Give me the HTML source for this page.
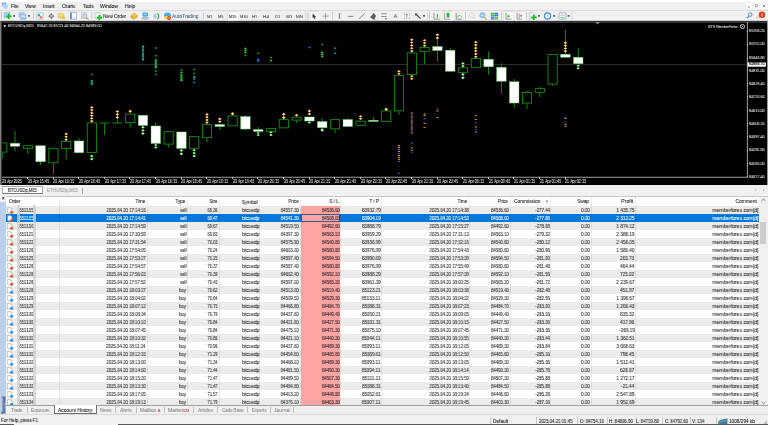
<!DOCTYPE html>
<html><head><meta charset="utf-8"><style>
html,body{margin:0;padding:0;}
body{width:768px;height:425px;overflow:hidden;position:relative;background:#f0f0f0;font-family:"Liberation Sans",sans-serif;}
body>div{position:absolute;}
.t{white-space:nowrap;-webkit-text-stroke:0.08px currentColor;will-change:transform;}
</style></head><body>
<div style="left:0px;top:0px;width:768px;height:10.5px;background:#f0f0f0;"></div>
<div style="left:0px;top:0px;width:768px;height:2px;background:#ffffff;"></div>
<div style="left:0px;top:10.2px;width:768px;height:0.6px;background:#dcdcdc;"></div>
<div class="t" style="left:11.00px;top:3.75px;font-size:5.0px;line-height:5.0px;color:#1a1a1a;transform:scaleX(0.919);transform-origin:left;">File</div>
<div class="t" style="left:25.00px;top:3.75px;font-size:5.0px;line-height:5.0px;color:#1a1a1a;transform:scaleX(0.986);transform-origin:left;">View</div>
<div class="t" style="left:42.75px;top:3.75px;font-size:5.0px;line-height:5.0px;color:#1a1a1a;transform:scaleX(0.932);transform-origin:left;">Insert</div>
<div class="t" style="left:62.00px;top:3.75px;font-size:5.0px;line-height:5.0px;color:#1a1a1a;transform:scaleX(0.883);transform-origin:left;">Charts</div>
<div class="t" style="left:82.50px;top:3.75px;font-size:5.0px;line-height:5.0px;color:#1a1a1a;transform:scaleX(0.900);transform-origin:left;">Tools</div>
<div class="t" style="left:100.00px;top:3.75px;font-size:5.0px;line-height:5.0px;color:#1a1a1a;transform:scaleX(1.012);transform-origin:left;">Window</div>
<div class="t" style="left:125.00px;top:3.75px;font-size:5.0px;line-height:5.0px;color:#1a1a1a;transform:scaleX(0.972);transform-origin:left;">Help</div>
<div style="left:0px;top:10.8px;width:768px;height:10.2px;background:#f0f0f0;"></div>
<svg style="position:absolute;left:0;top:0;z-index:2" width="768" height="22" viewBox="0 0 768 22"><rect x="1.8" y="2.6" width="4.6" height="3.8" rx="0.5" fill="#9cc4f0"/><rect x="3.4" y="4.8" width="4.4" height="4" rx="0.5" fill="#b4d4f8"/><rect x="2.2" y="3.1" width="3.6" height="0.8" fill="#6aa0e0"/><rect x="746" y="2.8" width="6.2" height="6" fill="#ffffff"/><rect x="753.2" y="2.8" width="6.2" height="6" fill="#ffffff"/><rect x="760.8" y="2.8" width="6.2" height="6" fill="#ffffff"/><rect x="747.6" y="6.6" width="2.4" height="0.7" fill="#505a6a"/><rect x="755.2" y="4.7" width="2.4" height="2.2" fill="none" stroke="#707a8a" stroke-width="0.6"/><path d="M762.8 4.6 L765.4 7.2 M765.4 4.6 L762.8 7.2" stroke="#505a6a" stroke-width="0.7"/><rect x="1.2" y="11.8" width="0.8" height="7.5" fill="#b8b8b8"/><rect x="4" y="12.4" width="6" height="5.4" rx="0.6" fill="#a8ccf2" stroke="#7aa8dc" stroke-width="0.4"/><path d="M8.8 13.8 V19 M6.2 16.4 H11.4" stroke="#10c020" stroke-width="1.8"/><rect x="13.2" y="15.0" width="1.8" height="1.8" fill="#5a5a5a"/><rect x="18.8" y="12.4" width="5.6" height="4.6" rx="0.5" fill="#b0d0f4" stroke="#80acdc" stroke-width="0.4"/><rect x="20.4" y="14.4" width="5.8" height="5" rx="0.5" fill="#a0c4ec" stroke="#7aa4d8" stroke-width="0.4"/><rect x="21.2" y="15.6" width="4.2" height="1.2" fill="#e8f2fc"/><rect x="28.1" y="15.0" width="1.8" height="1.8" fill="#5a5a5a"/><rect x="33" y="11.8" width="0.8" height="7.699999999999999" fill="#c4c4c4"/><rect x="36.3" y="12.5" width="7" height="7" rx="1" fill="#cfe2f8" stroke="#9cc0ec" stroke-width="0.5"/><rect x="37.6" y="13.8" width="4.6" height="4.6" fill="#f8fbff"/><circle cx="39" cy="15.2" r="1.2" fill="#30b040"/><circle cx="40.9" cy="17.2" r="1.3" fill="#f07850"/><path d="M51.3 13 L53 15.2 L49.6 15.2 Z M51.3 19.3 L53 17.1 L49.6 17.1 Z M48 16.15 L50.2 14.5 L50.2 17.8 Z M54.6 16.15 L52.4 14.5 L52.4 17.8 Z" fill="#787878"/><rect x="50.5" y="15.3" width="1.6" height="1.7" fill="#9a9a9a"/><path d="M58.2 13.2 H61.5 L62.3 14 H64 V17.5 H58.2 Z" fill="#f2d86a" stroke="#d8b840" stroke-width="0.4"/><path d="M63.4 15.3 L64.2 17 L66 17.2 L64.7 18.3 L65.1 19.8 L63.4 19 L61.7 19.8 L62.1 18.3 L60.8 17.2 L62.6 17 Z" fill="#f0c030"/><rect x="60" y="17.5" width="1" height="2" fill="#c0c0c0"/><rect x="68.7" y="10.9" width="10.299999999999997" height="9.6" fill="#fafafa"/><rect x="68.7" y="10.9" width="10.299999999999997" height="0.7" fill="#cfcfcf"/><rect x="68.7" y="10.9" width="0.6" height="9.6" fill="#dcdcdc"/><rect x="70.3" y="12.8" width="6.4" height="6.4" fill="#ffffff" stroke="#5b9ae0" stroke-width="0.6"/><rect x="70.3" y="12.8" width="1.5" height="6.4" fill="#4a88d8"/><rect x="72.4" y="17.4" width="4" height="1.2" fill="#f4d0d8"/><rect x="81.6" y="12.4" width="5.2" height="6.4" fill="#e8e8e8" stroke="#b8b8b8" stroke-width="0.4"/><circle cx="84.6" cy="16" r="2" fill="#cfe4f8" stroke="#6aa0dc" stroke-width="0.6"/><path d="M86 17.5 L88.6 19.7" stroke="#d89a30" stroke-width="1.1"/><rect x="91.4" y="11.8" width="0.8" height="7.699999999999999" fill="#c4c4c4"/><rect x="95" y="12.8" width="5" height="5.8" fill="#f4f4f4" stroke="#a8a8a8" stroke-width="0.5"/><path d="M99.4 14.9 V20.2 M96.8 17.6 H102.1" stroke="#10c020" stroke-width="1.8"/><path d="M130.8 15.8 L134 13 L137.2 15.2 L137 17.4 L133.6 19.2 L130.8 17.6 Z" fill="#e8b830" stroke="#c08a10" stroke-width="0.4"/><path d="M132 15.6 L134.2 14.2 L136 15.4" stroke="#fff0a0" stroke-width="0.6" fill="none"/><rect x="142.6" y="12.4" width="5.2" height="4.2" rx="0.8" fill="#38a4f0"/><rect x="143.8" y="13.6" width="2.8" height="1.6" fill="#9ad4ff"/><ellipse cx="145.2" cy="18.2" rx="3.5" ry="1.2" fill="#b8c4d4" stroke="#8898b0" stroke-width="0.4"/><circle cx="156.4" cy="16.2" r="3.4" fill="#eef4fa" stroke="#c8d8e8" stroke-width="0.4"/><path d="M156.4 13.6 A2.6 2.6 0 0 0 156.4 18.8 Z" fill="#a8c4ec"/><path d="M157.4 13.4 Q159.8 15.2 157.6 19.4" stroke="#38b038" stroke-width="1.2" fill="none"/><path d="M163.8 16 Q164 12.4 167.4 12.4 Q171 12.6 171 16 Z" fill="#4aa8e8"/><path d="M163.8 16 H171 L170 19.4 H165 Z" fill="#f0d040"/><circle cx="169.2" cy="18" r="1.9" fill="#e03020"/><rect x="168.2" y="17.6" width="2" height="0.8" fill="#ffffff"/><rect x="203.1" y="11.8" width="0.8" height="7.699999999999999" fill="#c4c4c4"/><rect x="227.1" y="10.9" width="10.700000000000017" height="9.6" fill="#fafafa"/><rect x="227.1" y="10.9" width="10.700000000000017" height="0.7" fill="#cfcfcf"/><rect x="227.1" y="10.9" width="0.6" height="9.6" fill="#dcdcdc"/><rect x="305.3" y="10.9" width="0.8" height="9.6" fill="#d4d4d4"/><rect x="306.9" y="12" width="0.7" height="7.6" fill="#d0d0d0"/><rect x="308.4" y="12" width="0.7" height="7.6" fill="#d0d0d0"/><rect x="309.7" y="10.9" width="9.699999999999989" height="9.6" fill="#fafafa"/><rect x="309.7" y="10.9" width="9.699999999999989" height="0.7" fill="#cfcfcf"/><rect x="309.7" y="10.9" width="0.6" height="9.6" fill="#dcdcdc"/><path d="M312.6 13.6 L312.6 18.4 L313.8 17.3 L314.8 19.2 L315.6 18.8 L314.7 17 L316.2 16.9 Z" fill="#3a3a3a"/><path d="M325.6 13 V19.2 M322.5 16.1 H328.8" stroke="#888" stroke-width="0.7"/><rect x="332" y="11.8" width="0.8" height="7.699999999999999" fill="#c4c4c4"/><rect x="338.9" y="13" width="0.9" height="6" fill="#6a6a6a"/><rect x="348" y="15.9" width="5.4" height="0.8" fill="#6a6a6a"/><path d="M359 18.8 L364.6 13.7" stroke="#6a6a6a" stroke-width="0.8"/><path d="M370 17 L372.2 15 L373.2 13 L374.8 14.2 L376 16 L374.6 18.4 L376 19.5 L372.8 19.2 Z" fill="#5a5a5a"/><rect x="381.2" y="13.4" width="5.6" height="0.8" fill="#7a7a7a"/><rect x="381.2" y="16.2" width="5.6" height="0.8" fill="#7a7a7a"/><rect x="385.2" y="18.2" width="1.6" height="1.2" fill="#5a5a5a"/><path d="M393.8 17.8 L395.5 14.2 L397.2 17.8 M394.5 16.6 H396.5" stroke="#6a6a6a" stroke-width="0.7" fill="none"/><rect x="404.2" y="13" width="5.2" height="5.8" fill="#f6f6f6" stroke="#a8a8a8" stroke-width="0.4"/><path d="M405.6 14.6 H408 M406.8 14.6 V17.6" stroke="#5a5a5a" stroke-width="0.6"/><path d="M415.4 13.8 L420.6 18.6" stroke="#4a4a4a" stroke-width="1.2"/><path d="M415 13.4 L417.6 13.8 L415.4 16 Z" fill="#3a3a3a"/><rect x="423.1" y="15.0" width="1.8" height="1.8" fill="#5a5a5a"/><rect x="427.4" y="10.9" width="0.8" height="9.6" fill="#d8d8d8"/><rect x="429.2" y="11.8" width="0.8" height="7.699999999999999" fill="#c4c4c4"/><path d="M434 12.8 V19.2 H439.6" stroke="#5a5a5a" stroke-width="0.6" fill="none"/><path d="M456.2 12.8 V19.2 H461.8" stroke="#5a5a5a" stroke-width="0.6" fill="none"/><rect x="436.8" y="14" width="1.2" height="4" fill="#50c050"/><rect x="442.8" y="10.9" width="9.699999999999989" height="9.6" fill="#fafafa"/><rect x="442.8" y="10.9" width="9.699999999999989" height="0.7" fill="#cfcfcf"/><rect x="442.8" y="10.9" width="0.6" height="9.6" fill="#dcdcdc"/><path d="M444.6 12.8 V19.2 H450.2" stroke="#5a5a5a" stroke-width="0.6" fill="none"/><rect x="446.6" y="12.8" width="2.8" height="4.6" rx="0.6" fill="#20b830"/><path d="M456.8 17.8 Q459 13.4 462 17.2" stroke="#50b050" stroke-width="0.8" fill="none"/><rect x="465.2" y="11.8" width="0.8" height="7.699999999999999" fill="#c4c4c4"/><circle cx="471.8" cy="15.4" r="2.4" fill="none" stroke="#c8c8c8" stroke-width="0.7"/><path d="M473.6 17.2 L475.2 19" stroke="#c8c8c8" stroke-width="0.9"/><circle cx="482.4" cy="15.2" r="2.6" fill="#9ccaf0" stroke="#6aaae4" stroke-width="0.6"/><rect x="481" y="15" width="2.8" height="0.7" fill="#e8f4ff"/><path d="M484.2 17.2 L486.6 19.6" stroke="#c8a040" stroke-width="1.2"/><rect x="490.8" y="12.8" width="3.5" height="3.3" fill="#48b848"/><rect x="494.6" y="12.8" width="3.5" height="3.3" fill="#3a78d8"/><rect x="490.8" y="16.4" width="3.5" height="3.3" fill="#5a90e0"/><rect x="494.6" y="16.4" width="3.5" height="3.3" fill="#78c060"/><rect x="491.6" y="14" width="1.8" height="0.6" fill="#e0f4e0"/><rect x="495.4" y="14" width="1.8" height="0.6" fill="#e0ecff"/><rect x="501" y="11.8" width="0.8" height="7.699999999999999" fill="#c4c4c4"/><rect x="503.5" y="10.9" width="10.0" height="9.6" fill="#fafafa"/><rect x="503.5" y="10.9" width="10.0" height="0.7" fill="#cfcfcf"/><rect x="503.5" y="10.9" width="0.6" height="9.6" fill="#dcdcdc"/><path d="M506 12.8 V19.2 H511.6" stroke="#5a5a5a" stroke-width="0.6" fill="none"/><path d="M507.4 14.2 L510 16.2 L507.4 18.2 Z" fill="#40c050"/><rect x="514.5" y="10.9" width="10.0" height="9.6" fill="#fafafa"/><rect x="514.5" y="10.9" width="10.0" height="0.7" fill="#cfcfcf"/><rect x="514.5" y="10.9" width="0.6" height="9.6" fill="#dcdcdc"/><path d="M517 12.8 V19.2 H522.6" stroke="#5a5a5a" stroke-width="0.6" fill="none"/><rect x="518.6" y="13.4" width="1" height="5" fill="#6aa0dc"/><circle cx="521" cy="15.8" r="1" fill="#e06040"/><rect x="526" y="11.8" width="0.8" height="7.699999999999999" fill="#c4c4c4"/><path d="M529.6 12.6 H533 L534.6 14.2 V18.6 H529.6 Z" fill="#f2f2f2" stroke="#a0a0a0" stroke-width="0.45"/><path d="M533.8 14.8 V20 M531.2 17.4 H536.6" stroke="#10c020" stroke-width="1.8"/><rect x="538.1" y="15.0" width="1.8" height="1.8" fill="#5a5a5a"/><circle cx="547.5" cy="16" r="3.1" fill="#f0f6fc" stroke="#3a88d8" stroke-width="1.1"/><path d="M547.4 14.4 V16.2 H548.6" stroke="#606060" stroke-width="0.4" fill="none"/><rect x="553.1" y="15.0" width="1.8" height="1.8" fill="#5a5a5a"/><rect x="559" y="12.8" width="7" height="6.4" rx="0.6" fill="#f4f8fc" stroke="#78a8e0" stroke-width="0.7"/><path d="M560.4 15.6 L562.2 14.8 L564 15.4 L565 14.8" stroke="#e05040" stroke-width="0.5" fill="none"/><rect x="560.2" y="17.2" width="4.8" height="0.9" fill="#80c870"/><rect x="567.7" y="15.0" width="1.8" height="1.8" fill="#5a5a5a"/><rect x="571.5" y="10.9" width="0.8" height="9.6" fill="#d0d0d0"/><circle cx="750.2" cy="14.6" r="1.8" fill="none" stroke="#3a80d8" stroke-width="0.9"/><path d="M748.8 16.2 L746.8 18.2" stroke="#3a80d8" stroke-width="1.1"/><ellipse cx="758" cy="17.4" rx="2" ry="1.8" fill="#d8d8d8"/><circle cx="762" cy="14.8" r="3.2" fill="#e23a20"/><rect x="761.7" y="13" width="0.7" height="3.6" fill="#ffffff"/></svg>
<div style="left:0px;top:21px;width:768px;height:164px;background:#000;"></div>
<svg style="position:absolute;left:0;top:0" width="768" height="425" viewBox="0 0 768 425">
<rect x="0" y="21" width="1.1" height="164" fill="#7a7a7a"/>
<rect x="1" y="21" width="1" height="164" fill="#3c3c3c"/>
<rect x="0" y="20.8" width="768" height="0.6" fill="#5a5a5a"/><rect x="1" y="21.4" width="767" height="1.6" fill="#363636"/>
<rect x="767" y="21" width="1" height="164" fill="#9a9a9a"/>
<rect x="2" y="176.8" width="745.5" height="0.8" fill="#c8c8c8"/>
<rect x="746.9" y="22" width="0.8" height="155.6" fill="#c8c8c8"/>
<rect x="2" y="64.1" width="745" height="0.8" fill="#343840"/>
<defs><clipPath id="pc"><rect x="2" y="22" width="744.9" height="154.8"/></clipPath></defs><g clip-path="url(#pc)">
<rect x="1.75" y="152.5" width="0.9" height="5.50" fill="#129a12"/>
<rect x="-2.40" y="142.9" width="9.2" height="9.20" fill="#000" stroke="#129a12" stroke-width="0.85"/>
<rect x="14.55" y="131" width="0.9" height="12.00" fill="#129a12"/>
<rect x="14.55" y="146.5" width="0.9" height="4.50" fill="#129a12"/>
<rect x="10.20" y="143.2" width="9.6" height="3.10" fill="#fff" stroke="#3ac03a" stroke-width="0.45"/>
<rect x="27.35" y="148.7" width="0.9" height="5.30" fill="#129a12"/>
<rect x="23.20" y="145.8" width="9.2" height="2.50" fill="#000" stroke="#129a12" stroke-width="0.85"/>
<rect x="40.15" y="145" width="0.9" height="0.50" fill="#129a12"/>
<rect x="40.15" y="162" width="0.9" height="3.00" fill="#129a12"/>
<rect x="35.80" y="145.7" width="9.6" height="16.10" fill="#fff" stroke="#3ac03a" stroke-width="0.45"/>
<rect x="52.95" y="163.2" width="0.9" height="10.55" fill="#129a12"/>
<rect x="48.80" y="148.70000000000002" width="9.2" height="14.10" fill="#000" stroke="#129a12" stroke-width="0.85"/>
<rect x="65.75" y="149" width="0.9" height="10.50" fill="#129a12"/>
<rect x="61.60" y="141.4" width="9.2" height="7.20" fill="#000" stroke="#129a12" stroke-width="0.85"/>
<rect x="78.55" y="138" width="0.9" height="2.75" fill="#129a12"/>
<rect x="74.20" y="140.95" width="9.6" height="11.85" fill="#fff" stroke="#3ac03a" stroke-width="0.45"/>
<rect x="87.20" y="122.9" width="9.2" height="29.70" fill="#000" stroke="#129a12" stroke-width="0.85"/>
<rect x="104.15" y="123" width="0.9" height="12.00" fill="#129a12"/>
<rect x="99.60" y="122.55" width="10" height="0.9" fill="#129a12"/>
<rect x="116.95" y="112" width="0.9" height="11.00" fill="#129a12"/>
<rect x="112.40" y="122.55" width="10" height="0.9" fill="#129a12"/>
<rect x="129.75" y="123" width="0.9" height="4.50" fill="#129a12"/>
<rect x="125.60" y="114.15" width="9.2" height="8.45" fill="#000" stroke="#129a12" stroke-width="0.85"/>
<rect x="138.20" y="115.2" width="9.6" height="10.35" fill="#fff" stroke="#3ac03a" stroke-width="0.45"/>
<rect x="155.35" y="122.5" width="0.9" height="3.25" fill="#129a12"/>
<rect x="151.00" y="125.95" width="9.6" height="17.60" fill="#fff" stroke="#3ac03a" stroke-width="0.45"/>
<rect x="168.15" y="144.5" width="0.9" height="3.00" fill="#129a12"/>
<rect x="164.00" y="131.65" width="9.2" height="12.45" fill="#000" stroke="#129a12" stroke-width="0.85"/>
<rect x="176.60" y="131.95" width="9.6" height="16.60" fill="#fff" stroke="#3ac03a" stroke-width="0.45"/>
<rect x="189.60" y="136.65" width="9.2" height="11.70" fill="#000" stroke="#129a12" stroke-width="0.85"/>
<rect x="206.55" y="138" width="0.9" height="4.50" fill="#129a12"/>
<rect x="202.40" y="124.65" width="9.2" height="12.95" fill="#000" stroke="#129a12" stroke-width="0.85"/>
<rect x="219.35" y="126.75" width="0.9" height="3.25" fill="#129a12"/>
<rect x="215.00" y="124.45" width="9.6" height="2.10" fill="#fff" stroke="#3ac03a" stroke-width="0.45"/>
<rect x="228.00" y="115.9" width="9.2" height="9.95" fill="#000" stroke="#129a12" stroke-width="0.85"/>
<rect x="244.95" y="115" width="0.9" height="1.25" fill="#129a12"/>
<rect x="244.95" y="129.25" width="0.9" height="1.25" fill="#129a12"/>
<rect x="240.60" y="116.45" width="9.6" height="12.60" fill="#fff" stroke="#3ac03a" stroke-width="0.45"/>
<rect x="257.75" y="127" width="0.9" height="2.25" fill="#129a12"/>
<rect x="253.40" y="129.45" width="9.6" height="2.10" fill="#fff" stroke="#3ac03a" stroke-width="0.45"/>
<rect x="266.40" y="128.65" width="9.2" height="2.70" fill="#000" stroke="#129a12" stroke-width="0.85"/>
<rect x="279.20" y="119.65" width="9.2" height="8.20" fill="#000" stroke="#129a12" stroke-width="0.85"/>
<rect x="296.15" y="120.5" width="0.9" height="2.50" fill="#129a12"/>
<rect x="292.00" y="117.15" width="9.2" height="2.95" fill="#000" stroke="#129a12" stroke-width="0.85"/>
<rect x="304.60" y="116.95" width="9.6" height="4.10" fill="#fff" stroke="#3ac03a" stroke-width="0.45"/>
<rect x="321.75" y="118" width="0.9" height="3.25" fill="#129a12"/>
<rect x="317.40" y="121.45" width="9.6" height="6.35" fill="#fff" stroke="#3ac03a" stroke-width="0.45"/>
<rect x="334.55" y="129.25" width="0.9" height="3.75" fill="#129a12"/>
<rect x="330.40" y="119.65" width="9.2" height="9.20" fill="#000" stroke="#129a12" stroke-width="0.85"/>
<rect x="347.35" y="118" width="0.9" height="1.25" fill="#129a12"/>
<rect x="343.00" y="119.45" width="9.6" height="7.10" fill="#fff" stroke="#3ac03a" stroke-width="0.45"/>
<rect x="356.00" y="121.15" width="9.2" height="4.20" fill="#000" stroke="#129a12" stroke-width="0.85"/>
<rect x="372.95" y="117" width="0.9" height="3.00" fill="#129a12"/>
<rect x="368.60" y="120.2" width="9.6" height="1.35" fill="#fff" stroke="#3ac03a" stroke-width="0.45"/>
<rect x="381.60" y="110.9" width="9.2" height="10.45" fill="#000" stroke="#129a12" stroke-width="0.85"/>
<rect x="398.55" y="111.25" width="0.9" height="3.75" fill="#129a12"/>
<rect x="394.40" y="75.4" width="9.2" height="35.45" fill="#000" stroke="#129a12" stroke-width="0.85"/>
<rect x="407.20" y="52.9" width="9.2" height="21.70" fill="#000" stroke="#129a12" stroke-width="0.85"/>
<rect x="424.15" y="52" width="0.9" height="12.00" fill="#129a12"/>
<rect x="420.00" y="47.4" width="9.2" height="4.20" fill="#000" stroke="#129a12" stroke-width="0.85"/>
<rect x="436.95" y="38.25" width="0.9" height="8.00" fill="#129a12"/>
<rect x="436.95" y="50.75" width="0.9" height="10.75" fill="#129a12"/>
<rect x="432.60" y="46.45" width="9.6" height="4.10" fill="#fff" stroke="#3ac03a" stroke-width="0.45"/>
<rect x="449.75" y="48" width="0.9" height="2.00" fill="#129a12"/>
<rect x="445.40" y="50.2" width="9.6" height="21.10" fill="#fff" stroke="#3ac03a" stroke-width="0.45"/>
<rect x="458.40" y="67.9" width="9.2" height="4.45" fill="#000" stroke="#129a12" stroke-width="0.85"/>
<rect x="471.20" y="58.65" width="9.2" height="8.70" fill="#000" stroke="#129a12" stroke-width="0.85"/>
<rect x="488.15" y="51.5" width="0.9" height="7.50" fill="#129a12"/>
<rect x="488.15" y="67" width="0.9" height="7.50" fill="#129a12"/>
<rect x="483.80" y="59.2" width="9.6" height="7.60" fill="#fff" stroke="#3ac03a" stroke-width="0.45"/>
<rect x="500.95" y="63.25" width="0.9" height="3.75" fill="#129a12"/>
<rect x="500.95" y="81.5" width="0.9" height="11.75" fill="#129a12"/>
<rect x="496.60" y="67.2" width="9.6" height="14.10" fill="#fff" stroke="#3ac03a" stroke-width="0.45"/>
<rect x="513.75" y="79" width="0.9" height="2.50" fill="#129a12"/>
<rect x="513.75" y="103.25" width="0.9" height="5.00" fill="#129a12"/>
<rect x="509.40" y="81.7" width="9.6" height="21.35" fill="#fff" stroke="#3ac03a" stroke-width="0.45"/>
<rect x="526.55" y="90.75" width="0.9" height="1.25" fill="#129a12"/>
<rect x="526.55" y="103.5" width="0.9" height="5.50" fill="#129a12"/>
<rect x="522.40" y="92.4" width="9.2" height="10.70" fill="#000" stroke="#129a12" stroke-width="0.85"/>
<rect x="539.35" y="86.5" width="0.9" height="1.75" fill="#129a12"/>
<rect x="539.35" y="92.75" width="0.9" height="4.25" fill="#129a12"/>
<rect x="535.20" y="88.65" width="9.2" height="3.70" fill="#000" stroke="#129a12" stroke-width="0.85"/>
<rect x="552.15" y="84.5" width="0.9" height="1.25" fill="#129a12"/>
<rect x="548.00" y="54.4" width="9.2" height="29.70" fill="#000" stroke="#129a12" stroke-width="0.85"/>
<rect x="564.95" y="30" width="0.9" height="24.00" fill="#129a12"/>
<rect x="560.60" y="54.2" width="9.6" height="3.10" fill="#fff" stroke="#3ac03a" stroke-width="0.45"/>
<rect x="577.75" y="48.25" width="0.9" height="8.75" fill="#129a12"/>
<rect x="573.40" y="57.2" width="9.6" height="6.60" fill="#fff" stroke="#3ac03a" stroke-width="0.45"/>
<polygon points="66.20,132.60 68.10,133.92 66.20,135.23 64.30,133.92" fill="#e89428"/>
<polygon points="66.00,133.20 67.30,133.92 66.00,134.73 64.90,133.92" fill="#fff6c0"/>
<polygon points="66.20,135.43 68.10,136.75 66.20,138.07 64.30,136.75" fill="#e89428"/>
<polygon points="66.00,136.03 67.30,136.75 66.00,137.57 64.90,136.75" fill="#fff6c0"/>
<polygon points="66.20,138.27 68.10,139.58 66.20,140.90 64.30,139.58" fill="#e89428"/>
<polygon points="66.00,138.87 67.30,139.58 66.00,140.40 64.90,139.58" fill="#fff6c0"/>
<polygon points="91.80,106.10 93.70,107.38 91.80,108.65 89.90,107.38" fill="#e89428"/>
<polygon points="91.60,106.70 92.90,107.38 91.60,108.15 90.50,107.38" fill="#fff6c0"/>
<polygon points="91.80,108.85 93.70,110.12 91.80,111.40 89.90,110.12" fill="#e89428"/>
<polygon points="91.60,109.45 92.90,110.12 91.60,110.90 90.50,110.12" fill="#fff6c0"/>
<polygon points="91.80,111.60 93.70,112.88 91.80,114.15 89.90,112.88" fill="#e89428"/>
<polygon points="91.60,112.20 92.90,112.88 91.60,113.65 90.50,112.88" fill="#fff6c0"/>
<polygon points="91.80,114.35 93.70,115.62 91.80,116.90 89.90,115.62" fill="#e89428"/>
<polygon points="91.60,114.95 92.90,115.62 91.60,116.40 90.50,115.62" fill="#fff6c0"/>
<polygon points="91.80,117.10 93.70,118.38 91.80,119.65 89.90,118.38" fill="#e89428"/>
<polygon points="91.60,117.70 92.90,118.38 91.60,119.15 90.50,118.38" fill="#fff6c0"/>
<polygon points="91.80,119.85 93.70,121.12 91.80,122.40 89.90,121.12" fill="#e89428"/>
<polygon points="91.60,120.45 92.90,121.12 91.60,121.90 90.50,121.12" fill="#fff6c0"/>
<polygon points="117.40,110.10 119.30,111.46 117.40,112.82 115.50,111.46" fill="#e89428"/>
<polygon points="117.20,110.70 118.50,111.46 117.20,112.32 116.10,111.46" fill="#fff6c0"/>
<polygon points="117.40,113.02 119.30,114.38 117.40,115.73 115.50,114.38" fill="#e89428"/>
<polygon points="117.20,113.62 118.50,114.38 117.20,115.23 116.10,114.38" fill="#fff6c0"/>
<polygon points="117.40,115.93 119.30,117.29 117.40,118.65 115.50,117.29" fill="#e89428"/>
<polygon points="117.20,116.53 118.50,117.29 117.20,118.15 116.10,117.29" fill="#fff6c0"/>
<polygon points="130.20,109.60 132.10,111.25 130.20,112.90 128.30,111.25" fill="#e89428"/>
<polygon points="130.00,110.20 131.30,111.25 130.00,112.40 128.90,111.25" fill="#fff6c0"/>
<polygon points="207.00,113.10 208.90,114.38 207.00,115.65 205.10,114.38" fill="#e89428"/>
<polygon points="206.80,113.70 208.10,114.38 206.80,115.15 205.70,114.38" fill="#fff6c0"/>
<polygon points="207.00,115.85 208.90,117.12 207.00,118.40 205.10,117.12" fill="#e89428"/>
<polygon points="206.80,116.45 208.10,117.12 206.80,117.90 205.70,117.12" fill="#fff6c0"/>
<polygon points="207.00,118.60 208.90,119.88 207.00,121.15 205.10,119.88" fill="#e89428"/>
<polygon points="206.80,119.20 208.10,119.88 206.80,120.65 205.70,119.88" fill="#fff6c0"/>
<polygon points="207.00,121.35 208.90,122.62 207.00,123.90 205.10,122.62" fill="#e89428"/>
<polygon points="206.80,121.95 208.10,122.62 206.80,123.40 205.70,122.62" fill="#fff6c0"/>
<polygon points="219.80,117.60 221.70,118.88 219.80,120.15 217.90,118.88" fill="#e89428"/>
<polygon points="219.60,118.20 220.90,118.88 219.60,119.65 218.50,118.88" fill="#fff6c0"/>
<polygon points="219.80,120.35 221.70,121.62 219.80,122.90 217.90,121.62" fill="#e89428"/>
<polygon points="219.60,120.95 220.90,121.62 219.60,122.40 218.50,121.62" fill="#fff6c0"/>
<polygon points="232.60,112.10 234.50,113.75 232.60,115.40 230.70,113.75" fill="#e89428"/>
<polygon points="232.40,112.70 233.70,113.75 232.40,114.90 231.30,113.75" fill="#fff6c0"/>
<polygon points="283.80,112.60 285.70,114.19 283.80,115.78 281.90,114.19" fill="#e89428"/>
<polygon points="283.60,113.20 284.90,114.19 283.60,115.28 282.50,114.19" fill="#fff6c0"/>
<polygon points="283.80,115.97 285.70,117.56 283.80,119.15 281.90,117.56" fill="#e89428"/>
<polygon points="283.60,116.58 284.90,117.56 283.60,118.65 282.50,117.56" fill="#fff6c0"/>
<polygon points="296.60,113.85 298.50,115.25 296.60,116.65 294.70,115.25" fill="#e89428"/>
<polygon points="296.40,114.45 297.70,115.25 296.40,116.15 295.30,115.25" fill="#fff6c0"/>
<polygon points="309.40,109.60 311.30,111.00 309.40,112.40 307.50,111.00" fill="#e89428"/>
<polygon points="309.20,110.20 310.50,111.00 309.20,111.90 308.10,111.00" fill="#fff6c0"/>
<polygon points="309.40,112.60 311.30,114.00 309.40,115.40 307.50,114.00" fill="#e89428"/>
<polygon points="309.20,113.20 310.50,114.00 309.20,114.90 308.10,114.00" fill="#fff6c0"/>
<polygon points="360.60,115.10 362.50,116.25 360.60,117.40 358.70,116.25" fill="#e89428"/>
<polygon points="360.40,115.70 361.70,116.25 360.40,116.90 359.30,116.25" fill="#fff6c0"/>
<polygon points="360.60,117.60 362.50,118.75 360.60,119.90 358.70,118.75" fill="#e89428"/>
<polygon points="360.40,118.20 361.70,118.75 360.40,119.40 359.30,118.75" fill="#fff6c0"/>
<polygon points="386.20,107.60 388.10,109.25 386.20,110.90 384.30,109.25" fill="#e89428"/>
<polygon points="386.00,108.20 387.30,109.25 386.00,110.40 384.90,109.25" fill="#fff6c0"/>
<polygon points="399.00,70.10 400.90,71.25 399.00,72.40 397.10,71.25" fill="#e89428"/>
<polygon points="398.80,70.70 400.10,71.25 398.80,71.90 397.70,71.25" fill="#fff6c0"/>
<polygon points="399.00,72.60 400.90,73.75 399.00,74.90 397.10,73.75" fill="#e89428"/>
<polygon points="398.80,73.20 400.10,73.75 398.80,74.40 397.70,73.75" fill="#fff6c0"/>
<polygon points="411.80,38.35 413.70,39.67 411.80,41.00 409.90,39.67" fill="#e89428"/>
<polygon points="411.60,38.95 412.90,39.67 411.60,40.50 410.50,39.67" fill="#fff6c0"/>
<polygon points="411.80,41.20 413.70,42.52 411.80,43.85 409.90,42.52" fill="#e89428"/>
<polygon points="411.60,41.80 412.90,42.52 411.60,43.35 410.50,42.52" fill="#fff6c0"/>
<polygon points="411.80,44.05 413.70,45.38 411.80,46.70 409.90,45.38" fill="#e89428"/>
<polygon points="411.60,44.65 412.90,45.38 411.60,46.20 410.50,45.38" fill="#fff6c0"/>
<polygon points="411.80,46.90 413.70,48.22 411.80,49.55 409.90,48.22" fill="#e89428"/>
<polygon points="411.60,47.50 412.90,48.22 411.60,49.05 410.50,48.22" fill="#fff6c0"/>
<polygon points="411.80,49.75 413.70,51.07 411.80,52.40 409.90,51.07" fill="#e89428"/>
<polygon points="411.60,50.35 412.90,51.07 411.60,51.90 410.50,51.07" fill="#fff6c0"/>
<polygon points="411.80,75.10 413.70,76.25 411.80,77.40 409.90,76.25" fill="#e89428"/>
<polygon points="411.60,75.70 412.90,76.25 411.60,76.90 410.50,76.25" fill="#fff6c0"/>
<polygon points="411.80,77.60 413.70,78.75 411.80,79.90 409.90,78.75" fill="#e89428"/>
<polygon points="411.60,78.20 412.90,78.75 411.60,79.40 410.50,78.75" fill="#fff6c0"/>
<polygon points="424.60,39.10 426.50,40.33 424.60,41.57 422.70,40.33" fill="#e89428"/>
<polygon points="424.40,39.70 425.70,40.33 424.40,41.07 423.30,40.33" fill="#fff6c0"/>
<polygon points="424.60,41.77 426.50,43.00 424.60,44.23 422.70,43.00" fill="#e89428"/>
<polygon points="424.40,42.37 425.70,43.00 424.40,43.73 423.30,43.00" fill="#fff6c0"/>
<polygon points="424.60,44.43 426.50,45.67 424.60,46.90 422.70,45.67" fill="#e89428"/>
<polygon points="424.40,45.03 425.70,45.67 424.40,46.40 423.30,45.67" fill="#fff6c0"/>
<polygon points="437.40,33.35 439.30,34.81 437.40,36.27 435.50,34.81" fill="#e89428"/>
<polygon points="437.20,33.95 438.50,34.81 437.20,35.77 436.10,34.81" fill="#fff6c0"/>
<polygon points="437.40,36.48 439.30,37.94 437.40,39.40 435.50,37.94" fill="#e89428"/>
<polygon points="437.20,37.08 438.50,37.94 437.20,38.90 436.10,37.94" fill="#fff6c0"/>
<polygon points="475.80,40.85 477.70,42.21 475.80,43.57 473.90,42.21" fill="#e89428"/>
<polygon points="475.60,41.45 476.90,42.21 475.60,43.07 474.50,42.21" fill="#fff6c0"/>
<polygon points="475.80,43.77 477.70,45.12 475.80,46.48 473.90,45.12" fill="#e89428"/>
<polygon points="475.60,44.37 476.90,45.12 475.60,45.98 474.50,45.12" fill="#fff6c0"/>
<polygon points="475.80,46.68 477.70,48.04 475.80,49.40 473.90,48.04" fill="#e89428"/>
<polygon points="475.60,47.28 476.90,48.04 475.60,48.90 474.50,48.04" fill="#fff6c0"/>
<polygon points="475.80,49.60 477.70,50.96 475.80,52.32 473.90,50.96" fill="#e89428"/>
<polygon points="475.60,50.20 476.90,50.96 475.60,51.82 474.50,50.96" fill="#fff6c0"/>
<polygon points="475.80,52.52 477.70,53.88 475.80,55.23 473.90,53.88" fill="#e89428"/>
<polygon points="475.60,53.12 476.90,53.88 475.60,54.73 474.50,53.88" fill="#fff6c0"/>
<polygon points="475.80,55.43 477.70,56.79 475.80,58.15 473.90,56.79" fill="#e89428"/>
<polygon points="475.60,56.03 476.90,56.79 475.60,57.65 474.50,56.79" fill="#fff6c0"/>
<polygon points="565.40,41.60 567.30,42.88 565.40,44.15 563.50,42.88" fill="#e89428"/>
<polygon points="565.20,42.20 566.50,42.88 565.20,43.65 564.10,42.88" fill="#fff6c0"/>
<polygon points="565.40,44.35 567.30,45.62 565.40,46.90 563.50,45.62" fill="#e89428"/>
<polygon points="565.20,44.95 566.50,45.62 565.20,46.40 564.10,45.62" fill="#fff6c0"/>
<polygon points="565.40,47.10 567.30,48.38 565.40,49.65 563.50,48.38" fill="#e89428"/>
<polygon points="565.20,47.70 566.50,48.38 565.20,49.15 564.10,48.38" fill="#fff6c0"/>
<polygon points="565.40,49.85 567.30,51.12 565.40,52.40 563.50,51.12" fill="#e89428"/>
<polygon points="565.20,50.45 566.50,51.12 565.20,51.90 564.10,51.12" fill="#fff6c0"/>
<polygon points="91.80,154.60 93.70,156.00 91.80,157.40 89.90,156.00" fill="#38c838"/>
<polygon points="91.60,155.20 92.90,156.00 91.60,156.90 90.50,156.00" fill="#e0ffe0"/>
<polygon points="91.80,157.60 93.70,159.00 91.80,160.40 89.90,159.00" fill="#38c838"/>
<polygon points="91.60,158.20 92.90,159.00 91.60,159.90 90.50,159.00" fill="#e0ffe0"/>
<polygon points="143.00,125.85 144.90,127.29 143.00,128.73 141.10,127.29" fill="#38c838"/>
<polygon points="142.80,126.45 144.10,127.29 142.80,128.23 141.70,127.29" fill="#e0ffe0"/>
<polygon points="143.00,128.93 144.90,130.38 143.00,131.82 141.10,130.38" fill="#38c838"/>
<polygon points="142.80,129.53 144.10,130.38 142.80,131.32 141.70,130.38" fill="#e0ffe0"/>
<polygon points="143.00,132.02 144.90,133.46 143.00,134.90 141.10,133.46" fill="#38c838"/>
<polygon points="142.80,132.62 144.10,133.46 142.80,134.40 141.70,133.46" fill="#e0ffe0"/>
<polygon points="155.80,143.85 157.70,145.00 155.80,146.15 153.90,145.00" fill="#38c838"/>
<polygon points="155.60,144.45 156.90,145.00 155.60,145.65 154.50,145.00" fill="#e0ffe0"/>
<polygon points="155.80,146.35 157.70,147.50 155.80,148.65 153.90,147.50" fill="#38c838"/>
<polygon points="155.60,146.95 156.90,147.50 155.60,148.15 154.50,147.50" fill="#e0ffe0"/>
<polygon points="181.40,148.85 183.30,150.44 181.40,152.03 179.50,150.44" fill="#38c838"/>
<polygon points="181.20,149.45 182.50,150.44 181.20,151.53 180.10,150.44" fill="#e0ffe0"/>
<polygon points="181.40,152.22 183.30,153.81 181.40,155.40 179.50,153.81" fill="#38c838"/>
<polygon points="181.20,152.82 182.50,153.81 181.20,154.90 180.10,153.81" fill="#e0ffe0"/>
<polygon points="194.20,148.85 196.10,150.21 194.20,151.57 192.30,150.21" fill="#38c838"/>
<polygon points="194.00,149.45 195.30,150.21 194.00,151.07 192.90,150.21" fill="#e0ffe0"/>
<polygon points="194.20,151.77 196.10,153.12 194.20,154.48 192.30,153.12" fill="#38c838"/>
<polygon points="194.00,152.37 195.30,153.12 194.00,153.98 192.90,153.12" fill="#e0ffe0"/>
<polygon points="194.20,154.68 196.10,156.04 194.20,157.40 192.30,156.04" fill="#38c838"/>
<polygon points="194.00,155.28 195.30,156.04 194.00,156.90 192.90,156.04" fill="#e0ffe0"/>
<polygon points="258.20,131.85 260.10,132.88 258.20,133.90 256.30,132.88" fill="#38c838"/>
<polygon points="258.00,132.45 259.30,132.88 258.00,133.40 256.90,132.88" fill="#e0ffe0"/>
<polygon points="258.20,134.10 260.10,135.12 258.20,136.15 256.30,135.12" fill="#38c838"/>
<polygon points="258.00,134.70 259.30,135.12 258.00,135.65 256.90,135.12" fill="#e0ffe0"/>
<polygon points="271.00,131.10 272.90,132.31 271.00,133.53 269.10,132.31" fill="#38c838"/>
<polygon points="270.80,131.70 272.10,132.31 270.80,133.03 269.70,132.31" fill="#e0ffe0"/>
<polygon points="271.00,133.72 272.90,134.94 271.00,136.15 269.10,134.94" fill="#38c838"/>
<polygon points="270.80,134.32 272.10,134.94 270.80,135.65 269.70,134.94" fill="#e0ffe0"/>
<polygon points="309.40,121.35 311.30,122.50 309.40,123.65 307.50,122.50" fill="#38c838"/>
<polygon points="309.20,121.95 310.50,122.50 309.20,123.15 308.10,122.50" fill="#e0ffe0"/>
<polygon points="322.20,128.10 324.10,130.00 322.20,131.90 320.30,130.00" fill="#38c838"/>
<polygon points="322.00,128.70 323.30,130.00 322.00,131.40 320.90,130.00" fill="#e0ffe0"/>
<polygon points="463.00,62.10 464.90,63.38 463.00,64.65 461.10,63.38" fill="#38c838"/>
<polygon points="462.80,62.70 464.10,63.38 462.80,64.15 461.70,63.38" fill="#e0ffe0"/>
<polygon points="463.00,64.85 464.90,66.12 463.00,67.40 461.10,66.12" fill="#38c838"/>
<polygon points="462.80,65.45 464.10,66.12 462.80,66.90 461.70,66.12" fill="#e0ffe0"/>
<polygon points="463.00,72.85 464.90,74.44 463.00,76.03 461.10,74.44" fill="#38c838"/>
<polygon points="462.80,73.45 464.10,74.44 462.80,75.53 461.70,74.44" fill="#e0ffe0"/>
<polygon points="463.00,76.22 464.90,77.81 463.00,79.40 461.10,77.81" fill="#38c838"/>
<polygon points="462.80,76.83 464.10,77.81 462.80,78.90 461.70,77.81" fill="#e0ffe0"/>
<polygon points="578.20,64.60 580.10,65.75 578.20,66.90 576.30,65.75" fill="#38c838"/>
<polygon points="578.00,65.20 579.30,65.75 578.00,66.40 576.90,65.75" fill="#e0ffe0"/>
<polygon points="578.20,67.10 580.10,68.25 578.20,69.40 576.30,68.25" fill="#38c838"/>
<polygon points="578.00,67.70 579.30,68.25 578.00,68.90 576.90,68.25" fill="#e0ffe0"/>
<rect x="90.70" y="73.75" width="2.2" height="1.5" fill="#1a8a2a"/>
<rect x="90.70" y="80.25" width="2.2" height="1.5" fill="#28d048"/>
<rect x="90.70" y="81.75" width="2.2" height="1.5" fill="#2070d8"/>
<rect x="90.70" y="83.25" width="2.2" height="1.5" fill="#28d048"/>
<rect x="141.90" y="45.75" width="2.2" height="1.5" fill="#28d048"/>
<rect x="141.90" y="47.25" width="2.2" height="1.5" fill="#2070d8"/>
<rect x="141.90" y="49.25" width="2.2" height="1.5" fill="#28d048"/>
<rect x="141.90" y="51.25" width="2.2" height="1.5" fill="#2070d8"/>
<rect x="141.90" y="53.25" width="2.2" height="1.5" fill="#28d048"/>
<rect x="141.90" y="55.25" width="2.2" height="1.5" fill="#28d048"/>
<rect x="141.90" y="57.25" width="2.2" height="1.5" fill="#2070d8"/>
<rect x="141.90" y="58.75" width="2.2" height="1.5" fill="#28d048"/>
<rect x="154.70" y="47.25" width="2.2" height="1.5" fill="#1a8a2a"/>
<rect x="154.70" y="55.00" width="2.2" height="1.5" fill="#1a8a2a"/>
<rect x="154.70" y="59.25" width="2.2" height="1.5" fill="#28d048"/>
<rect x="154.70" y="61.25" width="2.2" height="1.5" fill="#28d048"/>
<rect x="154.70" y="63.25" width="2.2" height="1.5" fill="#28d048"/>
<rect x="154.70" y="65.25" width="2.2" height="1.5" fill="#28d048"/>
<rect x="154.70" y="66.75" width="2.2" height="1.5" fill="#28d048"/>
<rect x="154.70" y="70.25" width="2.2" height="1.5" fill="#1a8a2a"/>
<rect x="154.70" y="73.75" width="2.2" height="1.5" fill="#1a8a2a"/>
<rect x="180.30" y="69.25" width="2.2" height="1.5" fill="#1a8a2a"/>
<rect x="180.30" y="71.75" width="2.2" height="1.5" fill="#28d048"/>
<rect x="180.30" y="74.25" width="2.2" height="1.5" fill="#28d048"/>
<rect x="180.30" y="76.25" width="2.2" height="1.5" fill="#28d048"/>
<rect x="180.30" y="78.25" width="2.2" height="1.5" fill="#28d048"/>
<rect x="180.30" y="79.75" width="2.2" height="1.5" fill="#28d048"/>
<rect x="193.10" y="68.75" width="2.2" height="1.5" fill="#1a8a2a"/>
<rect x="193.10" y="72.75" width="2.2" height="1.5" fill="#1a8a2a"/>
<rect x="193.10" y="76.25" width="2.2" height="1.5" fill="#28d048"/>
<rect x="193.10" y="78.25" width="2.2" height="1.5" fill="#2070d8"/>
<rect x="193.10" y="81.75" width="2.2" height="1.5" fill="#2070d8"/>
<rect x="244.30" y="47.75" width="2.2" height="1.5" fill="#28d048"/>
<rect x="244.30" y="49.75" width="2.2" height="1.5" fill="#28d048"/>
<rect x="244.30" y="51.75" width="2.2" height="1.5" fill="#28d048"/>
<rect x="244.30" y="54.75" width="2.2" height="1.5" fill="#1a8a2a"/>
<rect x="257.10" y="52.50" width="2.2" height="1.5" fill="#1a8a2a"/>
<rect x="257.10" y="58.75" width="2.2" height="1.5" fill="#2070d8"/>
<rect x="257.10" y="60.25" width="2.2" height="1.5" fill="#2070d8"/>
<rect x="269.90" y="56.75" width="2.2" height="1.5" fill="#1a8a2a"/>
<rect x="269.90" y="59.75" width="2.2" height="1.5" fill="#28d048"/>
<rect x="308.30" y="46.75" width="2.2" height="1.5" fill="#2070d8"/>
<rect x="321.10" y="43.75" width="2.2" height="1.5" fill="#1a8a2a"/>
<rect x="321.10" y="51.75" width="2.2" height="1.5" fill="#28d048"/>
<rect x="321.10" y="53.75" width="2.2" height="1.5" fill="#28d048"/>
<rect x="321.10" y="55.75" width="2.2" height="1.5" fill="#28d048"/>
<rect x="333.90" y="47.50" width="2.2" height="1.5" fill="#1a8a2a"/>
<rect x="333.90" y="52.50" width="2.2" height="1.5" fill="#2070d8"/>
<rect x="397.90" y="144.95" width="2.2" height="1.1" fill="#d08a30"/>
<rect x="397.90" y="146.95" width="2.2" height="1.1" fill="#d08a30"/>
<rect x="397.90" y="148.95" width="2.2" height="1.1" fill="#6a50c0"/>
<rect x="397.90" y="150.95" width="2.2" height="1.1" fill="#d08a30"/>
<rect x="397.90" y="152.95" width="2.2" height="1.1" fill="#2a3ab8"/>
<rect x="397.90" y="154.95" width="2.2" height="1.1" fill="#d08a30"/>
<rect x="397.90" y="156.95" width="2.2" height="1.1" fill="#d08a30"/>
<rect x="397.90" y="158.95" width="2.2" height="1.1" fill="#d08a30"/>
<rect x="397.90" y="160.95" width="2.2" height="1.1" fill="#6a50c0"/>
<rect x="397.90" y="172.70" width="2.2" height="1.1" fill="#6a50c0"/>
<rect x="410.70" y="112.45" width="2.2" height="1.1" fill="#d08a30"/>
<rect x="410.70" y="114.45" width="2.2" height="1.1" fill="#6a50c0"/>
<rect x="410.70" y="116.45" width="2.2" height="1.1" fill="#d08a30"/>
<rect x="410.70" y="118.45" width="2.2" height="1.1" fill="#6a50c0"/>
<rect x="410.70" y="120.45" width="2.2" height="1.1" fill="#d08a30"/>
<rect x="410.70" y="122.45" width="2.2" height="1.1" fill="#d08a30"/>
<rect x="410.70" y="124.45" width="2.2" height="1.1" fill="#6a50c0"/>
<rect x="410.70" y="126.45" width="2.2" height="1.1" fill="#d08a30"/>
<rect x="410.70" y="128.45" width="2.2" height="1.1" fill="#d08a30"/>
<rect x="410.70" y="130.45" width="2.2" height="1.1" fill="#6a50c0"/>
<rect x="410.70" y="132.45" width="2.2" height="1.1" fill="#d08a30"/>
<rect x="410.70" y="142.45" width="2.2" height="1.1" fill="#6a50c0"/>
<rect x="410.70" y="147.45" width="2.2" height="1.1" fill="#d08a30"/>
<rect x="410.70" y="149.95" width="2.2" height="1.1" fill="#d08a30"/>
<rect x="410.70" y="151.95" width="2.2" height="1.1" fill="#2a3ab8"/>
<rect x="423.50" y="113.45" width="2.2" height="1.1" fill="#d08a30"/>
<rect x="423.50" y="114.95" width="2.2" height="1.1" fill="#d08a30"/>
<rect x="423.50" y="118.20" width="2.2" height="1.1" fill="#6a50c0"/>
<rect x="423.50" y="122.70" width="2.2" height="1.1" fill="#d08a30"/>
<rect x="423.50" y="126.95" width="2.2" height="1.1" fill="#d08a30"/>
<rect x="436.30" y="108.45" width="2.2" height="1.1" fill="#6a50c0"/>
<rect x="436.30" y="110.45" width="2.2" height="1.1" fill="#d08a30"/>
<rect x="436.30" y="116.95" width="2.2" height="1.1" fill="#d08a30"/>
<rect x="474.70" y="114.95" width="2.2" height="1.1" fill="#d08a30"/>
<rect x="474.70" y="118.95" width="2.2" height="1.1" fill="#d08a30"/>
<rect x="474.70" y="121.95" width="2.2" height="1.1" fill="#2a3ab8"/>
<rect x="474.70" y="126.45" width="2.2" height="1.1" fill="#d08a30"/>
<rect x="474.70" y="128.95" width="2.2" height="1.1" fill="#2a3ab8"/>
<rect x="474.70" y="131.45" width="2.2" height="1.1" fill="#d08a30"/>
<rect x="564.30" y="116.45" width="2.2" height="1.1" fill="#2a3ab8"/>
<rect x="564.30" y="117.95" width="2.2" height="1.1" fill="#d08a30"/>
<rect x="564.30" y="121.45" width="2.2" height="1.1" fill="#2a3ab8"/>
<rect x="564.30" y="123.70" width="2.2" height="1.1" fill="#d08a30"/>
<rect x="564.30" y="125.70" width="2.2" height="1.1" fill="#d08a30"/>
</g>
<polygon points="595.5,22 599.5,22 597.5,24.5" fill="#8899aa"/>
<rect x="747.6" y="62.4" width="18.3" height="4.3" fill="#ffffff"/>
</svg>
<div class="t" style="left:102.80px;top:14.95px;font-size:4.8px;line-height:4.8px;color:#303030;z-index:3;">New Order</div>
<div class="t" style="left:172.40px;top:14.95px;font-size:4.8px;line-height:4.8px;color:#5a6a80;transform:scaleX(1.024);transform-origin:left;z-index:3;">AutoTrading</div>
<div class="t" style="left:207.20px;top:15.14px;font-size:4.0px;line-height:4.0px;color:#505050;transform:scaleX(0.954);transform-origin:left;z-index:3;">M1</div>
<div class="t" style="left:218.40px;top:15.14px;font-size:4.0px;line-height:4.0px;color:#505050;z-index:3;">M5</div>
<div class="t" style="left:229.00px;top:15.14px;font-size:4.0px;line-height:4.0px;color:#303030;transform:scaleX(0.925);transform-origin:left;z-index:3;">M15</div>
<div class="t" style="left:240.00px;top:15.14px;font-size:4.0px;line-height:4.0px;color:#505050;z-index:3;">M30</div>
<div class="t" style="left:252.40px;top:15.14px;font-size:4.0px;line-height:4.0px;color:#505050;transform:scaleX(0.978);transform-origin:left;z-index:3;">H1</div>
<div class="t" style="left:263.00px;top:15.14px;font-size:4.0px;line-height:4.0px;color:#505050;transform:scaleX(1.173);transform-origin:left;z-index:3;">H4</div>
<div class="t" style="left:275.00px;top:15.14px;font-size:4.0px;line-height:4.0px;color:#505050;transform:scaleX(0.978);transform-origin:left;z-index:3;">D1</div>
<div class="t" style="left:285.60px;top:15.14px;font-size:4.0px;line-height:4.0px;color:#505050;transform:scaleX(1.067);transform-origin:left;z-index:3;">W1</div>
<div class="t" style="left:296.00px;top:15.14px;font-size:4.0px;line-height:4.0px;color:#505050;transform:scaleX(1.125);transform-origin:left;z-index:3;">MN</div>
<svg style="position:absolute;left:2.8px;top:24.6px" width="4" height="3" viewBox="0 0 4 3"><path d="M0.2 0.3 H3.3 L1.75 2.4 Z" fill="#e8e8e8"/></svg>
<div class="t" style="left:7.90px;top:24.09px;font-size:4.3px;line-height:4.3px;color:#e4e4e4;transform:scaleX(0.871);transform-origin:left;-webkit-text-stroke:0.05px #e4e4e4;">BTCUSDp,M15</div>
<div class="t" style="left:36.50px;top:24.09px;font-size:4.3px;line-height:4.3px;color:#e4e4e4;transform:scaleX(0.864);transform-origin:left;-webkit-text-stroke:0.05px #e4e4e4;">85047.20 85111.40 84944.20 84989.10</div>
<div class="t" style="left:708.00px;top:24.79px;font-size:4.3px;line-height:4.3px;color:#e4e4e4;transform:scaleX(0.797);transform-origin:left;-webkit-text-stroke:0.05px #e4e4e4;">GTR MemberForex</div>
<div style="left:740px;top:24.4px;width:4.7px;height:4.7px;border:0.6px solid #d0d0d0;border-radius:50%;box-sizing:border-box"></div><div style="left:741.7px;top:25.9px;width:1.3px;height:1.5px;background:#b8b8b8"></div>
<div class="t" style="left:749.00px;top:29.39px;font-size:4.3px;line-height:4.3px;color:#e4e4e4;transform:scaleX(0.870);transform-origin:left;-webkit-text-stroke:0.05px #e4e4e4;">85258.20</div>
<div style="left:746.9px;top:30.6px;width:1.6px;height:0.8px;background:#c8c8c8"></div>
<div class="t" style="left:749.00px;top:42.39px;font-size:4.3px;line-height:4.3px;color:#e4e4e4;transform:scaleX(0.870);transform-origin:left;-webkit-text-stroke:0.05px #e4e4e4;">85152.00</div>
<div style="left:746.9px;top:43.6px;width:1.6px;height:0.8px;background:#c8c8c8"></div>
<div class="t" style="left:749.00px;top:55.89px;font-size:4.3px;line-height:4.3px;color:#e4e4e4;transform:scaleX(0.870);transform-origin:left;-webkit-text-stroke:0.05px #e4e4e4;">85043.80</div>
<div style="left:746.9px;top:57.1px;width:1.6px;height:0.8px;background:#c8c8c8"></div>
<div class="t" style="left:749.00px;top:69.14px;font-size:4.3px;line-height:4.3px;color:#e4e4e4;transform:scaleX(0.870);transform-origin:left;-webkit-text-stroke:0.05px #e4e4e4;">84931.00</div>
<div style="left:746.9px;top:70.35px;width:1.6px;height:0.8px;background:#c8c8c8"></div>
<div class="t" style="left:749.00px;top:81.64px;font-size:4.3px;line-height:4.3px;color:#e4e4e4;transform:scaleX(0.870);transform-origin:left;-webkit-text-stroke:0.05px #e4e4e4;">84829.40</div>
<div style="left:746.9px;top:82.85px;width:1.6px;height:0.8px;background:#c8c8c8"></div>
<div class="t" style="left:749.00px;top:94.89px;font-size:4.3px;line-height:4.3px;color:#e4e4e4;transform:scaleX(0.870);transform-origin:left;-webkit-text-stroke:0.05px #e4e4e4;">84720.60</div>
<div style="left:746.9px;top:96.1px;width:1.6px;height:0.8px;background:#c8c8c8"></div>
<div class="t" style="left:749.00px;top:108.64px;font-size:4.3px;line-height:4.3px;color:#e4e4e4;transform:scaleX(0.870);transform-origin:left;-webkit-text-stroke:0.05px #e4e4e4;">84613.00</div>
<div style="left:746.9px;top:109.85px;width:1.6px;height:0.8px;background:#c8c8c8"></div>
<div class="t" style="left:749.00px;top:121.89px;font-size:4.3px;line-height:4.3px;color:#e4e4e4;transform:scaleX(0.870);transform-origin:left;-webkit-text-stroke:0.05px #e4e4e4;">84506.20</div>
<div style="left:746.9px;top:123.1px;width:1.6px;height:0.8px;background:#c8c8c8"></div>
<div class="t" style="left:749.00px;top:135.14px;font-size:4.3px;line-height:4.3px;color:#e4e4e4;transform:scaleX(0.870);transform-origin:left;-webkit-text-stroke:0.05px #e4e4e4;">84397.40</div>
<div style="left:746.9px;top:136.35px;width:1.6px;height:0.8px;background:#c8c8c8"></div>
<div class="t" style="left:749.00px;top:148.39px;font-size:4.3px;line-height:4.3px;color:#e4e4e4;transform:scaleX(0.870);transform-origin:left;-webkit-text-stroke:0.05px #e4e4e4;">84291.80</div>
<div style="left:746.9px;top:149.6px;width:1.6px;height:0.8px;background:#c8c8c8"></div>
<div class="t" style="left:749.00px;top:161.59px;font-size:4.3px;line-height:4.3px;color:#e4e4e4;transform:scaleX(0.870);transform-origin:left;-webkit-text-stroke:0.05px #e4e4e4;">84183.00</div>
<div style="left:746.9px;top:162.79999999999998px;width:1.6px;height:0.8px;background:#c8c8c8"></div>
<div class="t" style="left:749.00px;top:174.69px;font-size:4.3px;line-height:4.3px;color:#e4e4e4;transform:scaleX(0.870);transform-origin:left;-webkit-text-stroke:0.05px #e4e4e4;">84077.40</div>
<div style="left:746.9px;top:175.9px;width:1.6px;height:0.8px;background:#c8c8c8"></div>
<div class="t" style="left:749.00px;top:62.49px;font-size:4.3px;line-height:4.3px;color:#000;transform:scaleX(0.870);transform-origin:left;">84989.10</div>
<div class="t" style="left:2.10px;top:180.25px;font-size:4.6px;line-height:4.6px;color:#e4e4e4;transform:scaleX(0.806);transform-origin:left;-webkit-text-stroke:0.05px #e4e4e4;">20 Apr 2025</div>
<div class="t" style="left:27.70px;top:180.25px;font-size:4.6px;line-height:4.6px;color:#e4e4e4;transform:scaleX(0.813);transform-origin:left;-webkit-text-stroke:0.05px #e4e4e4;">20 Apr 15:45</div>
<div style="left:27.00px;top:177px;width:0.8px;height:2px;background:#c8c8c8"></div>
<div class="t" style="left:53.30px;top:180.25px;font-size:4.6px;line-height:4.6px;color:#e4e4e4;transform:scaleX(0.813);transform-origin:left;-webkit-text-stroke:0.05px #e4e4e4;">20 Apr 16:15</div>
<div style="left:52.60px;top:177px;width:0.8px;height:2px;background:#c8c8c8"></div>
<div class="t" style="left:78.90px;top:180.25px;font-size:4.6px;line-height:4.6px;color:#e4e4e4;transform:scaleX(0.813);transform-origin:left;-webkit-text-stroke:0.05px #e4e4e4;">20 Apr 16:45</div>
<div style="left:78.20px;top:177px;width:0.8px;height:2px;background:#c8c8c8"></div>
<div class="t" style="left:104.50px;top:180.25px;font-size:4.6px;line-height:4.6px;color:#e4e4e4;transform:scaleX(0.813);transform-origin:left;-webkit-text-stroke:0.05px #e4e4e4;">20 Apr 17:15</div>
<div style="left:103.80px;top:177px;width:0.8px;height:2px;background:#c8c8c8"></div>
<div class="t" style="left:130.10px;top:180.25px;font-size:4.6px;line-height:4.6px;color:#e4e4e4;transform:scaleX(0.813);transform-origin:left;-webkit-text-stroke:0.05px #e4e4e4;">20 Apr 17:45</div>
<div style="left:129.40px;top:177px;width:0.8px;height:2px;background:#c8c8c8"></div>
<div class="t" style="left:155.70px;top:180.25px;font-size:4.6px;line-height:4.6px;color:#e4e4e4;transform:scaleX(0.813);transform-origin:left;-webkit-text-stroke:0.05px #e4e4e4;">20 Apr 18:15</div>
<div style="left:155.00px;top:177px;width:0.8px;height:2px;background:#c8c8c8"></div>
<div class="t" style="left:181.30px;top:180.25px;font-size:4.6px;line-height:4.6px;color:#e4e4e4;transform:scaleX(0.813);transform-origin:left;-webkit-text-stroke:0.05px #e4e4e4;">20 Apr 18:45</div>
<div style="left:180.60px;top:177px;width:0.8px;height:2px;background:#c8c8c8"></div>
<div class="t" style="left:206.90px;top:180.25px;font-size:4.6px;line-height:4.6px;color:#e4e4e4;transform:scaleX(0.813);transform-origin:left;-webkit-text-stroke:0.05px #e4e4e4;">20 Apr 19:15</div>
<div style="left:206.20px;top:177px;width:0.8px;height:2px;background:#c8c8c8"></div>
<div class="t" style="left:232.50px;top:180.25px;font-size:4.6px;line-height:4.6px;color:#e4e4e4;transform:scaleX(0.813);transform-origin:left;-webkit-text-stroke:0.05px #e4e4e4;">20 Apr 19:45</div>
<div style="left:231.80px;top:177px;width:0.8px;height:2px;background:#c8c8c8"></div>
<div class="t" style="left:258.10px;top:180.25px;font-size:4.6px;line-height:4.6px;color:#e4e4e4;transform:scaleX(0.813);transform-origin:left;-webkit-text-stroke:0.05px #e4e4e4;">20 Apr 20:15</div>
<div style="left:257.40px;top:177px;width:0.8px;height:2px;background:#c8c8c8"></div>
<div class="t" style="left:283.70px;top:180.25px;font-size:4.6px;line-height:4.6px;color:#e4e4e4;transform:scaleX(0.813);transform-origin:left;-webkit-text-stroke:0.05px #e4e4e4;">20 Apr 20:45</div>
<div style="left:283.00px;top:177px;width:0.8px;height:2px;background:#c8c8c8"></div>
<div class="t" style="left:309.30px;top:180.25px;font-size:4.6px;line-height:4.6px;color:#e4e4e4;transform:scaleX(0.813);transform-origin:left;-webkit-text-stroke:0.05px #e4e4e4;">20 Apr 21:15</div>
<div style="left:308.60px;top:177px;width:0.8px;height:2px;background:#c8c8c8"></div>
<div class="t" style="left:334.90px;top:180.25px;font-size:4.6px;line-height:4.6px;color:#e4e4e4;transform:scaleX(0.813);transform-origin:left;-webkit-text-stroke:0.05px #e4e4e4;">20 Apr 21:45</div>
<div style="left:334.20px;top:177px;width:0.8px;height:2px;background:#c8c8c8"></div>
<div class="t" style="left:360.50px;top:180.25px;font-size:4.6px;line-height:4.6px;color:#e4e4e4;transform:scaleX(0.813);transform-origin:left;-webkit-text-stroke:0.05px #e4e4e4;">20 Apr 22:15</div>
<div style="left:359.80px;top:177px;width:0.8px;height:2px;background:#c8c8c8"></div>
<div class="t" style="left:386.10px;top:180.25px;font-size:4.6px;line-height:4.6px;color:#e4e4e4;transform:scaleX(0.813);transform-origin:left;-webkit-text-stroke:0.05px #e4e4e4;">20 Apr 22:45</div>
<div style="left:385.40px;top:177px;width:0.8px;height:2px;background:#c8c8c8"></div>
<div class="t" style="left:411.70px;top:180.25px;font-size:4.6px;line-height:4.6px;color:#e4e4e4;transform:scaleX(0.813);transform-origin:left;-webkit-text-stroke:0.05px #e4e4e4;">20 Apr 23:15</div>
<div style="left:411.00px;top:177px;width:0.8px;height:2px;background:#c8c8c8"></div>
<div class="t" style="left:437.30px;top:180.25px;font-size:4.6px;line-height:4.6px;color:#e4e4e4;transform:scaleX(0.813);transform-origin:left;-webkit-text-stroke:0.05px #e4e4e4;">20 Apr 23:45</div>
<div style="left:436.60px;top:177px;width:0.8px;height:2px;background:#c8c8c8"></div>
<div class="t" style="left:462.90px;top:180.25px;font-size:4.6px;line-height:4.6px;color:#e4e4e4;transform:scaleX(0.813);transform-origin:left;-webkit-text-stroke:0.05px #e4e4e4;">21 Apr 00:15</div>
<div style="left:462.20px;top:177px;width:0.8px;height:2px;background:#c8c8c8"></div>
<div class="t" style="left:488.50px;top:180.25px;font-size:4.6px;line-height:4.6px;color:#e4e4e4;transform:scaleX(0.813);transform-origin:left;-webkit-text-stroke:0.05px #e4e4e4;">21 Apr 00:45</div>
<div style="left:487.80px;top:177px;width:0.8px;height:2px;background:#c8c8c8"></div>
<div class="t" style="left:514.10px;top:180.25px;font-size:4.6px;line-height:4.6px;color:#e4e4e4;transform:scaleX(0.813);transform-origin:left;-webkit-text-stroke:0.05px #e4e4e4;">21 Apr 01:15</div>
<div style="left:513.40px;top:177px;width:0.8px;height:2px;background:#c8c8c8"></div>
<div class="t" style="left:539.70px;top:180.25px;font-size:4.6px;line-height:4.6px;color:#e4e4e4;transform:scaleX(0.813);transform-origin:left;-webkit-text-stroke:0.05px #e4e4e4;">21 Apr 01:45</div>
<div style="left:539.00px;top:177px;width:0.8px;height:2px;background:#c8c8c8"></div>
<div class="t" style="left:565.30px;top:180.25px;font-size:4.6px;line-height:4.6px;color:#e4e4e4;transform:scaleX(0.813);transform-origin:left;-webkit-text-stroke:0.05px #e4e4e4;">21 Apr 02:15</div>
<div style="left:564.60px;top:177px;width:0.8px;height:2px;background:#c8c8c8"></div>
<div style="left:0px;top:185px;width:768px;height:11px;background:#f0f0f0;"></div>
<div style="left:2px;top:186.3px;width:40.5px;height:8.2px;background:#fff;border:0.7px solid #a8a8a8;border-bottom-color:#7a7a7a;box-sizing:border-box"></div>
<div class="t" style="left:8.00px;top:189.15px;font-size:4.6px;line-height:4.6px;color:#1a1a1a;transform:scaleX(0.915);transform-origin:left;">BTCUSDp,M15</div>
<div class="t" style="left:47.00px;top:189.15px;font-size:4.6px;line-height:4.6px;color:#9a9a9a;transform:scaleX(0.978);transform-origin:left;">ETHUSDp,M15</div>
<div style="left:82.3px;top:187.5px;width:0.6px;height:6px;background:#a0a0a0;"></div>
<div class="t" style="left:755.25px;top:187.79px;font-size:4.5px;line-height:4.5px;color:#909090;">‹</div>
<div class="t" style="left:762.75px;top:187.79px;font-size:4.5px;line-height:4.5px;color:#909090;">›</div>
<div style="left:0px;top:196px;width:768px;height:219px;background:#f0f0f0;"></div>
<div style="left:0px;top:202px;width:6px;height:212.5px;background:#b9d1ea;"></div>
<div class="t" style="left:1.59px;top:196.99px;font-size:4.5px;line-height:4.5px;color:#202020;">×</div>
<div class="t" style="left:-6.5px;top:402.6px;width:20px;height:5px;font-size:4.8px;line-height:5px;color:#1a3a6a;-webkit-text-stroke:0.15px #1a3a6a;transform:rotate(-90deg);text-align:center">Terminal</div>
<div style="left:6px;top:196px;width:762px;height:209.6px;background:#ffffff;"></div>
<div style="left:6px;top:196px;width:762px;height:0.6px;background:#c8c8c8;"></div>
<div style="left:6px;top:206.1px;width:753.5px;height:8.0px;background:#ebebeb;"></div>
<div style="left:300.75px;top:206.1px;width:39.65px;height:8.0px;background:#ffa3a3;"></div>
<div style="left:6px;top:214.1px;width:753.5px;height:8.0px;background:#0078d7;"></div>
<div style="left:300.75px;top:214.20px;width:39.65px;height:7.80px;background:#ffa3a3;border:0.6px solid #3a5a8a;box-sizing:border-box"></div>
<div style="left:6px;top:222.1px;width:753.5px;height:8.0px;background:#ebebeb;"></div>
<div style="left:300.75px;top:222.1px;width:39.65px;height:8.0px;background:#ffa3a3;"></div>
<div style="left:300.75px;top:230.1px;width:39.65px;height:8.0px;background:#ffa3a3;"></div>
<div style="left:6px;top:238.1px;width:753.5px;height:8.0px;background:#ebebeb;"></div>
<div style="left:300.75px;top:238.1px;width:39.65px;height:8.0px;background:#ffa3a3;"></div>
<div style="left:300.75px;top:246.1px;width:39.65px;height:8.0px;background:#ffa3a3;"></div>
<div style="left:6px;top:254.1px;width:753.5px;height:8.0px;background:#ebebeb;"></div>
<div style="left:300.75px;top:254.1px;width:39.65px;height:8.0px;background:#ffa3a3;"></div>
<div style="left:300.75px;top:262.1px;width:39.65px;height:8.0px;background:#ffa3a3;"></div>
<div style="left:6px;top:270.1px;width:753.5px;height:8.0px;background:#ebebeb;"></div>
<div style="left:300.75px;top:270.1px;width:39.65px;height:8.0px;background:#ffa3a3;"></div>
<div style="left:300.75px;top:278.1px;width:39.65px;height:8.0px;background:#ffa3a3;"></div>
<div style="left:6px;top:286.1px;width:753.5px;height:8.0px;background:#ebebeb;"></div>
<div style="left:300.75px;top:286.1px;width:39.65px;height:8.0px;background:#ffa3a3;"></div>
<div style="left:300.75px;top:294.1px;width:39.65px;height:8.0px;background:#ffa3a3;"></div>
<div style="left:6px;top:302.1px;width:753.5px;height:8.0px;background:#ebebeb;"></div>
<div style="left:300.75px;top:302.1px;width:39.65px;height:8.0px;background:#ffa3a3;"></div>
<div style="left:300.75px;top:310.1px;width:39.65px;height:8.0px;background:#ffa3a3;"></div>
<div style="left:6px;top:318.1px;width:753.5px;height:8.0px;background:#ebebeb;"></div>
<div style="left:300.75px;top:318.1px;width:39.65px;height:8.0px;background:#ffa3a3;"></div>
<div style="left:300.75px;top:326.1px;width:39.65px;height:8.0px;background:#ffa3a3;"></div>
<div style="left:6px;top:334.1px;width:753.5px;height:8.0px;background:#ebebeb;"></div>
<div style="left:300.75px;top:334.1px;width:39.65px;height:8.0px;background:#ffa3a3;"></div>
<div style="left:300.75px;top:342.1px;width:39.65px;height:8.0px;background:#ffa3a3;"></div>
<div style="left:6px;top:350.1px;width:753.5px;height:8.0px;background:#ebebeb;"></div>
<div style="left:300.75px;top:350.1px;width:39.65px;height:8.0px;background:#ffa3a3;"></div>
<div style="left:300.75px;top:358.1px;width:39.65px;height:8.0px;background:#ffa3a3;"></div>
<div style="left:6px;top:366.1px;width:753.5px;height:8.0px;background:#ebebeb;"></div>
<div style="left:300.75px;top:366.1px;width:39.65px;height:8.0px;background:#ffa3a3;"></div>
<div style="left:300.75px;top:374.1px;width:39.65px;height:8.0px;background:#ffa3a3;"></div>
<div style="left:6px;top:382.1px;width:753.5px;height:8.0px;background:#ebebeb;"></div>
<div style="left:300.75px;top:382.1px;width:39.65px;height:8.0px;background:#ffa3a3;"></div>
<div style="left:300.75px;top:390.1px;width:39.65px;height:8.0px;background:#ffa3a3;"></div>
<div style="left:6px;top:398.1px;width:753.5px;height:8.0px;background:#ebebeb;"></div>
<div style="left:300.75px;top:398.1px;width:39.65px;height:8.0px;background:#ffa3a3;"></div>
<div style="left:58.800000000000004px;top:196.6px;width:0.6px;height:209px;background:rgba(0,0,0,0.07);"></div>
<div style="left:146.79999999999998px;top:196.6px;width:0.6px;height:209px;background:rgba(0,0,0,0.07);"></div>
<div style="left:186.7px;top:196.6px;width:0.6px;height:209px;background:rgba(0,0,0,0.07);"></div>
<div style="left:218.79999999999998px;top:196.6px;width:0.6px;height:209px;background:rgba(0,0,0,0.07);"></div>
<div style="left:259.2px;top:196.6px;width:0.6px;height:209px;background:rgba(0,0,0,0.07);"></div>
<div style="left:300.09999999999997px;top:196.6px;width:0.6px;height:209px;background:rgba(0,0,0,0.07);"></div>
<div style="left:340.09999999999997px;top:196.6px;width:0.6px;height:209px;background:rgba(0,0,0,0.07);"></div>
<div style="left:380.95px;top:196.6px;width:0.6px;height:209px;background:rgba(0,0,0,0.07);"></div>
<div style="left:469.45px;top:196.6px;width:0.6px;height:209px;background:rgba(0,0,0,0.07);"></div>
<div style="left:510.3px;top:196.6px;width:0.6px;height:209px;background:rgba(0,0,0,0.07);"></div>
<div style="left:549.95px;top:196.6px;width:0.6px;height:209px;background:rgba(0,0,0,0.07);"></div>
<div style="left:591.1px;top:196.6px;width:0.6px;height:209px;background:rgba(0,0,0,0.07);"></div>
<div style="left:635.45px;top:196.6px;width:0.6px;height:209px;background:rgba(0,0,0,0.07);"></div>
<svg style="position:absolute;left:7px;top:207.30px" width="7" height="7" viewBox="0 0 7 7"><path d="M0.6 0.4 H3.6 L5 1.8 V5.8 H0.6 Z" fill="#ffffff" stroke="#9a9a9a" stroke-width="0.5"/><path d="M3.6 0.4 V1.8 H5" fill="none" stroke="#9a9a9a" stroke-width="0.4"/><circle cx="4.7" cy="5.2" r="1.5" fill="#e8502a"/></svg>
<div class="t" style="left:19.20px;top:208.05px;font-size:5.0px;line-height:5.0px;color:#2a2a2a;transform:scaleX(0.910);transform-origin:left;">651115</div>
<div class="t" style="left:99.73px;top:208.05px;font-size:5.0px;line-height:5.0px;color:#2a2a2a;transform:scaleX(0.859);transform-origin:right;">2025.04.20 17:14:16</div>
<div class="t" style="left:178.50px;top:208.05px;font-size:5.0px;line-height:5.0px;color:#2a2a2a;transform:scaleX(0.853);transform-origin:right;">sell</div>
<div class="t" style="left:205.39px;top:208.05px;font-size:5.0px;line-height:5.0px;color:#2a2a2a;transform:scaleX(0.799);transform-origin:right;">69.36</div>
<div class="t" style="left:240.54px;top:207.90px;font-size:5.3px;line-height:5.3px;color:#2a2a2a;transform:scaleX(0.943);transform-origin:right;">btcusdp</div>
<div class="t" style="left:278.25px;top:208.05px;font-size:5.0px;line-height:5.0px;color:#2a2a2a;transform:scaleX(0.868);transform-origin:right;">84557.30</div>
<div class="t" style="left:318.65px;top:208.05px;font-size:5.0px;line-height:5.0px;color:#1e1e1e;transform:scaleX(0.858);transform-origin:right;">84536.60</div>
<div class="t" style="left:359.55px;top:208.05px;font-size:5.0px;line-height:5.0px;color:#2a2a2a;transform:scaleX(0.902);transform-origin:right;">83932.79</div>
<div class="t" style="left:423.03px;top:208.05px;font-size:5.0px;line-height:5.0px;color:#2a2a2a;transform:scaleX(0.859);transform-origin:right;">2025.04.20 17:14:38</div>
<div class="t" style="left:488.15px;top:208.05px;font-size:5.0px;line-height:5.0px;color:#2a2a2a;transform:scaleX(0.851);transform-origin:right;">84536.60</div>
<div class="t" style="left:532.79px;top:208.05px;font-size:5.0px;line-height:5.0px;color:#2a2a2a;transform:scaleX(0.870);transform-origin:right;">-277.44</div>
<div class="t" style="left:580.02px;top:208.05px;font-size:5.0px;line-height:5.0px;color:#2a2a2a;transform:scaleX(0.899);transform-origin:right;">0.00</div>
<div class="t" style="left:615.04px;top:208.05px;font-size:5.0px;line-height:5.0px;color:#2a2a2a;transform:scaleX(0.930);transform-origin:right;">1 435.75</div>
<div class="t" style="left:709.66px;top:207.90px;font-size:5.3px;line-height:5.3px;color:#2a2a2a;transform:scaleX(0.952);transform-origin:right;">memberforex.com[d]</div>
<svg style="position:absolute;left:7px;top:215.30px" width="7" height="7" viewBox="0 0 7 7"><path d="M0.6 0.4 H3.6 L5 1.8 V5.8 H0.6 Z" fill="#ffffff" stroke="#9a9a9a" stroke-width="0.5"/><path d="M3.6 0.4 V1.8 H5" fill="none" stroke="#9a9a9a" stroke-width="0.4"/><circle cx="4.7" cy="5.2" r="1.5" fill="#e8502a"/></svg>
<div class="t" style="left:19.20px;top:216.05px;font-size:5.0px;line-height:5.0px;color:#ffffff;transform:scaleX(0.910);transform-origin:left;">651115</div>
<div class="t" style="left:99.73px;top:216.05px;font-size:5.0px;line-height:5.0px;color:#ffffff;transform:scaleX(0.859);transform-origin:right;">2025.04.20 17:14:41</div>
<div class="t" style="left:178.50px;top:216.05px;font-size:5.0px;line-height:5.0px;color:#ffffff;transform:scaleX(0.853);transform-origin:right;">sell</div>
<div class="t" style="left:205.39px;top:216.05px;font-size:5.0px;line-height:5.0px;color:#ffffff;transform:scaleX(0.799);transform-origin:right;">69.47</div>
<div class="t" style="left:240.54px;top:215.90px;font-size:5.3px;line-height:5.3px;color:#ffffff;transform:scaleX(0.943);transform-origin:right;">btcusdp</div>
<div class="t" style="left:278.25px;top:216.05px;font-size:5.0px;line-height:5.0px;color:#ffffff;transform:scaleX(0.868);transform-origin:right;">84541.30</div>
<div class="t" style="left:318.65px;top:216.05px;font-size:5.0px;line-height:5.0px;color:#1e1e1e;transform:scaleX(0.858);transform-origin:right;">84508.00</div>
<div class="t" style="left:359.55px;top:216.05px;font-size:5.0px;line-height:5.0px;color:#ffffff;transform:scaleX(0.902);transform-origin:right;">83904.19</div>
<div class="t" style="left:423.03px;top:216.05px;font-size:5.0px;line-height:5.0px;color:#ffffff;transform:scaleX(0.859);transform-origin:right;">2025.04.20 17:14:53</div>
<div class="t" style="left:488.15px;top:216.05px;font-size:5.0px;line-height:5.0px;color:#ffffff;transform:scaleX(0.851);transform-origin:right;">84508.00</div>
<div class="t" style="left:532.79px;top:216.05px;font-size:5.0px;line-height:5.0px;color:#ffffff;transform:scaleX(0.870);transform-origin:right;">-277.88</div>
<div class="t" style="left:580.02px;top:216.05px;font-size:5.0px;line-height:5.0px;color:#ffffff;transform:scaleX(0.899);transform-origin:right;">0.00</div>
<div class="t" style="left:615.04px;top:216.05px;font-size:5.0px;line-height:5.0px;color:#ffffff;transform:scaleX(0.930);transform-origin:right;">2 313.25</div>
<div class="t" style="left:709.66px;top:215.90px;font-size:5.3px;line-height:5.3px;color:#ffffff;transform:scaleX(0.952);transform-origin:right;">memberforex.com[d]</div>
<svg style="position:absolute;left:7px;top:223.30px" width="7" height="7" viewBox="0 0 7 7"><path d="M0.6 0.4 H3.6 L5 1.8 V5.8 H0.6 Z" fill="#ffffff" stroke="#9a9a9a" stroke-width="0.5"/><path d="M3.6 0.4 V1.8 H5" fill="none" stroke="#9a9a9a" stroke-width="0.4"/><circle cx="4.7" cy="5.2" r="1.5" fill="#e8502a"/></svg>
<div class="t" style="left:19.20px;top:224.05px;font-size:5.0px;line-height:5.0px;color:#2a2a2a;transform:scaleX(0.910);transform-origin:left;">651116</div>
<div class="t" style="left:99.73px;top:224.05px;font-size:5.0px;line-height:5.0px;color:#2a2a2a;transform:scaleX(0.859);transform-origin:right;">2025.04.20 17:14:59</div>
<div class="t" style="left:178.50px;top:224.05px;font-size:5.0px;line-height:5.0px;color:#2a2a2a;transform:scaleX(0.853);transform-origin:right;">sell</div>
<div class="t" style="left:205.39px;top:224.05px;font-size:5.0px;line-height:5.0px;color:#2a2a2a;transform:scaleX(0.799);transform-origin:right;">69.67</div>
<div class="t" style="left:240.54px;top:223.90px;font-size:5.3px;line-height:5.3px;color:#2a2a2a;transform:scaleX(0.943);transform-origin:right;">btcusdp</div>
<div class="t" style="left:278.25px;top:224.05px;font-size:5.0px;line-height:5.0px;color:#2a2a2a;transform:scaleX(0.868);transform-origin:right;">84519.50</div>
<div class="t" style="left:318.65px;top:224.05px;font-size:5.0px;line-height:5.0px;color:#1e1e1e;transform:scaleX(0.858);transform-origin:right;">84492.60</div>
<div class="t" style="left:359.55px;top:224.05px;font-size:5.0px;line-height:5.0px;color:#2a2a2a;transform:scaleX(0.902);transform-origin:right;">83888.79</div>
<div class="t" style="left:423.03px;top:224.05px;font-size:5.0px;line-height:5.0px;color:#2a2a2a;transform:scaleX(0.859);transform-origin:right;">2025.04.20 17:15:27</div>
<div class="t" style="left:488.15px;top:224.05px;font-size:5.0px;line-height:5.0px;color:#2a2a2a;transform:scaleX(0.851);transform-origin:right;">84492.60</div>
<div class="t" style="left:532.79px;top:224.05px;font-size:5.0px;line-height:5.0px;color:#2a2a2a;transform:scaleX(0.870);transform-origin:right;">-278.68</div>
<div class="t" style="left:580.02px;top:224.05px;font-size:5.0px;line-height:5.0px;color:#2a2a2a;transform:scaleX(0.899);transform-origin:right;">0.00</div>
<div class="t" style="left:615.04px;top:224.05px;font-size:5.0px;line-height:5.0px;color:#2a2a2a;transform:scaleX(0.930);transform-origin:right;">1 874.12</div>
<div class="t" style="left:709.66px;top:223.90px;font-size:5.3px;line-height:5.3px;color:#2a2a2a;transform:scaleX(0.952);transform-origin:right;">memberforex.com[d]</div>
<svg style="position:absolute;left:7px;top:231.30px" width="7" height="7" viewBox="0 0 7 7"><path d="M0.6 0.4 H3.6 L5 1.8 V5.8 H0.6 Z" fill="#ffffff" stroke="#9a9a9a" stroke-width="0.5"/><path d="M3.6 0.4 V1.8 H5" fill="none" stroke="#9a9a9a" stroke-width="0.4"/><circle cx="4.7" cy="5.2" r="1.5" fill="#e8502a"/></svg>
<div class="t" style="left:19.20px;top:232.05px;font-size:5.0px;line-height:5.0px;color:#2a2a2a;transform:scaleX(0.889);transform-origin:left;">651121</div>
<div class="t" style="left:99.73px;top:232.05px;font-size:5.0px;line-height:5.0px;color:#2a2a2a;transform:scaleX(0.859);transform-origin:right;">2025.04.20 17:30:59</div>
<div class="t" style="left:178.50px;top:232.05px;font-size:5.0px;line-height:5.0px;color:#2a2a2a;transform:scaleX(0.853);transform-origin:right;">sell</div>
<div class="t" style="left:205.39px;top:232.05px;font-size:5.0px;line-height:5.0px;color:#2a2a2a;transform:scaleX(0.799);transform-origin:right;">69.83</div>
<div class="t" style="left:240.54px;top:231.90px;font-size:5.3px;line-height:5.3px;color:#2a2a2a;transform:scaleX(0.943);transform-origin:right;">btcusdp</div>
<div class="t" style="left:278.25px;top:232.05px;font-size:5.0px;line-height:5.0px;color:#2a2a2a;transform:scaleX(0.868);transform-origin:right;">84397.30</div>
<div class="t" style="left:318.65px;top:232.05px;font-size:5.0px;line-height:5.0px;color:#1e1e1e;transform:scaleX(0.858);transform-origin:right;">84563.10</div>
<div class="t" style="left:359.55px;top:232.05px;font-size:5.0px;line-height:5.0px;color:#2a2a2a;transform:scaleX(0.902);transform-origin:right;">83959.29</div>
<div class="t" style="left:423.03px;top:232.05px;font-size:5.0px;line-height:5.0px;color:#2a2a2a;transform:scaleX(0.859);transform-origin:right;">2025.04.20 17:31:13</div>
<div class="t" style="left:488.15px;top:232.05px;font-size:5.0px;line-height:5.0px;color:#2a2a2a;transform:scaleX(0.851);transform-origin:right;">84563.10</div>
<div class="t" style="left:532.79px;top:232.05px;font-size:5.0px;line-height:5.0px;color:#2a2a2a;transform:scaleX(0.870);transform-origin:right;">-279.32</div>
<div class="t" style="left:580.02px;top:232.05px;font-size:5.0px;line-height:5.0px;color:#2a2a2a;transform:scaleX(0.899);transform-origin:right;">0.00</div>
<div class="t" style="left:615.04px;top:232.05px;font-size:5.0px;line-height:5.0px;color:#2a2a2a;transform:scaleX(0.930);transform-origin:right;">2 388.19</div>
<div class="t" style="left:709.66px;top:231.90px;font-size:5.3px;line-height:5.3px;color:#2a2a2a;transform:scaleX(0.952);transform-origin:right;">memberforex.com[d]</div>
<svg style="position:absolute;left:7px;top:239.30px" width="7" height="7" viewBox="0 0 7 7"><path d="M0.6 0.4 H3.6 L5 1.8 V5.8 H0.6 Z" fill="#ffffff" stroke="#9a9a9a" stroke-width="0.5"/><path d="M3.6 0.4 V1.8 H5" fill="none" stroke="#9a9a9a" stroke-width="0.4"/><circle cx="4.7" cy="5.2" r="1.5" fill="#e8502a"/></svg>
<div class="t" style="left:19.20px;top:240.05px;font-size:5.0px;line-height:5.0px;color:#2a2a2a;transform:scaleX(0.889);transform-origin:left;">651122</div>
<div class="t" style="left:99.73px;top:240.05px;font-size:5.0px;line-height:5.0px;color:#2a2a2a;transform:scaleX(0.859);transform-origin:right;">2025.04.20 17:31:54</div>
<div class="t" style="left:178.50px;top:240.05px;font-size:5.0px;line-height:5.0px;color:#2a2a2a;transform:scaleX(0.853);transform-origin:right;">sell</div>
<div class="t" style="left:205.39px;top:240.05px;font-size:5.0px;line-height:5.0px;color:#2a2a2a;transform:scaleX(0.799);transform-origin:right;">70.03</div>
<div class="t" style="left:240.54px;top:239.90px;font-size:5.3px;line-height:5.3px;color:#2a2a2a;transform:scaleX(0.943);transform-origin:right;">btcusdp</div>
<div class="t" style="left:278.25px;top:240.05px;font-size:5.0px;line-height:5.0px;color:#2a2a2a;transform:scaleX(0.868);transform-origin:right;">84575.90</div>
<div class="t" style="left:318.65px;top:240.05px;font-size:5.0px;line-height:5.0px;color:#1e1e1e;transform:scaleX(0.858);transform-origin:right;">84540.80</div>
<div class="t" style="left:359.55px;top:240.05px;font-size:5.0px;line-height:5.0px;color:#2a2a2a;transform:scaleX(0.902);transform-origin:right;">83936.99</div>
<div class="t" style="left:423.03px;top:240.05px;font-size:5.0px;line-height:5.0px;color:#2a2a2a;transform:scaleX(0.859);transform-origin:right;">2025.04.20 17:32:16</div>
<div class="t" style="left:488.15px;top:240.05px;font-size:5.0px;line-height:5.0px;color:#2a2a2a;transform:scaleX(0.851);transform-origin:right;">84540.80</div>
<div class="t" style="left:532.79px;top:240.05px;font-size:5.0px;line-height:5.0px;color:#2a2a2a;transform:scaleX(0.870);transform-origin:right;">-280.12</div>
<div class="t" style="left:580.02px;top:240.05px;font-size:5.0px;line-height:5.0px;color:#2a2a2a;transform:scaleX(0.899);transform-origin:right;">0.00</div>
<div class="t" style="left:615.04px;top:240.05px;font-size:5.0px;line-height:5.0px;color:#2a2a2a;transform:scaleX(0.930);transform-origin:right;">2 458.05</div>
<div class="t" style="left:709.66px;top:239.90px;font-size:5.3px;line-height:5.3px;color:#2a2a2a;transform:scaleX(0.952);transform-origin:right;">memberforex.com[d]</div>
<svg style="position:absolute;left:7px;top:247.30px" width="7" height="7" viewBox="0 0 7 7"><path d="M0.6 0.4 H3.6 L5 1.8 V5.8 H0.6 Z" fill="#ffffff" stroke="#9a9a9a" stroke-width="0.5"/><path d="M3.6 0.4 V1.8 H5" fill="none" stroke="#9a9a9a" stroke-width="0.4"/><circle cx="4.7" cy="5.2" r="1.5" fill="#e8502a"/></svg>
<div class="t" style="left:19.20px;top:248.05px;font-size:5.0px;line-height:5.0px;color:#2a2a2a;transform:scaleX(0.889);transform-origin:left;">651126</div>
<div class="t" style="left:99.73px;top:248.05px;font-size:5.0px;line-height:5.0px;color:#2a2a2a;transform:scaleX(0.859);transform-origin:right;">2025.04.20 17:54:05</div>
<div class="t" style="left:178.50px;top:248.05px;font-size:5.0px;line-height:5.0px;color:#2a2a2a;transform:scaleX(0.853);transform-origin:right;">sell</div>
<div class="t" style="left:205.39px;top:248.05px;font-size:5.0px;line-height:5.0px;color:#2a2a2a;transform:scaleX(0.799);transform-origin:right;">70.24</div>
<div class="t" style="left:240.54px;top:247.90px;font-size:5.3px;line-height:5.3px;color:#2a2a2a;transform:scaleX(0.943);transform-origin:right;">btcusdp</div>
<div class="t" style="left:278.25px;top:248.05px;font-size:5.0px;line-height:5.0px;color:#2a2a2a;transform:scaleX(0.868);transform-origin:right;">84603.30</div>
<div class="t" style="left:318.65px;top:248.05px;font-size:5.0px;line-height:5.0px;color:#1e1e1e;transform:scaleX(0.858);transform-origin:right;">84580.80</div>
<div class="t" style="left:359.55px;top:248.05px;font-size:5.0px;line-height:5.0px;color:#2a2a2a;transform:scaleX(0.902);transform-origin:right;">83976.99</div>
<div class="t" style="left:423.03px;top:248.05px;font-size:5.0px;line-height:5.0px;color:#2a2a2a;transform:scaleX(0.859);transform-origin:right;">2025.04.20 17:54:43</div>
<div class="t" style="left:488.15px;top:248.05px;font-size:5.0px;line-height:5.0px;color:#2a2a2a;transform:scaleX(0.851);transform-origin:right;">84580.80</div>
<div class="t" style="left:532.79px;top:248.05px;font-size:5.0px;line-height:5.0px;color:#2a2a2a;transform:scaleX(0.870);transform-origin:right;">-280.96</div>
<div class="t" style="left:580.02px;top:248.05px;font-size:5.0px;line-height:5.0px;color:#2a2a2a;transform:scaleX(0.899);transform-origin:right;">0.00</div>
<div class="t" style="left:615.04px;top:248.05px;font-size:5.0px;line-height:5.0px;color:#2a2a2a;transform:scaleX(0.930);transform-origin:right;">1 580.40</div>
<div class="t" style="left:709.66px;top:247.90px;font-size:5.3px;line-height:5.3px;color:#2a2a2a;transform:scaleX(0.952);transform-origin:right;">memberforex.com[d]</div>
<svg style="position:absolute;left:7px;top:255.30px" width="7" height="7" viewBox="0 0 7 7"><path d="M0.6 0.4 H3.6 L5 1.8 V5.8 H0.6 Z" fill="#ffffff" stroke="#9a9a9a" stroke-width="0.5"/><path d="M3.6 0.4 V1.8 H5" fill="none" stroke="#9a9a9a" stroke-width="0.4"/><circle cx="4.7" cy="5.2" r="1.5" fill="#e8502a"/></svg>
<div class="t" style="left:19.20px;top:256.05px;font-size:5.0px;line-height:5.0px;color:#2a2a2a;transform:scaleX(0.889);transform-origin:left;">651125</div>
<div class="t" style="left:99.73px;top:256.05px;font-size:5.0px;line-height:5.0px;color:#2a2a2a;transform:scaleX(0.859);transform-origin:right;">2025.04.20 17:53:27</div>
<div class="t" style="left:178.50px;top:256.05px;font-size:5.0px;line-height:5.0px;color:#2a2a2a;transform:scaleX(0.853);transform-origin:right;">sell</div>
<div class="t" style="left:205.39px;top:256.05px;font-size:5.0px;line-height:5.0px;color:#2a2a2a;transform:scaleX(0.799);transform-origin:right;">70.25</div>
<div class="t" style="left:240.54px;top:255.90px;font-size:5.3px;line-height:5.3px;color:#2a2a2a;transform:scaleX(0.943);transform-origin:right;">btcusdp</div>
<div class="t" style="left:278.25px;top:256.05px;font-size:5.0px;line-height:5.0px;color:#2a2a2a;transform:scaleX(0.868);transform-origin:right;">84597.40</div>
<div class="t" style="left:318.65px;top:256.05px;font-size:5.0px;line-height:5.0px;color:#1e1e1e;transform:scaleX(0.858);transform-origin:right;">84594.50</div>
<div class="t" style="left:359.55px;top:256.05px;font-size:5.0px;line-height:5.0px;color:#2a2a2a;transform:scaleX(0.902);transform-origin:right;">83990.69</div>
<div class="t" style="left:423.03px;top:256.05px;font-size:5.0px;line-height:5.0px;color:#2a2a2a;transform:scaleX(0.859);transform-origin:right;">2025.04.20 17:53:39</div>
<div class="t" style="left:488.15px;top:256.05px;font-size:5.0px;line-height:5.0px;color:#2a2a2a;transform:scaleX(0.851);transform-origin:right;">84594.50</div>
<div class="t" style="left:532.79px;top:256.05px;font-size:5.0px;line-height:5.0px;color:#2a2a2a;transform:scaleX(0.870);transform-origin:right;">-281.00</div>
<div class="t" style="left:580.02px;top:256.05px;font-size:5.0px;line-height:5.0px;color:#2a2a2a;transform:scaleX(0.899);transform-origin:right;">0.00</div>
<div class="t" style="left:619.21px;top:256.05px;font-size:5.0px;line-height:5.0px;color:#2a2a2a;transform:scaleX(0.930);transform-origin:right;">203.73</div>
<div class="t" style="left:709.66px;top:255.90px;font-size:5.3px;line-height:5.3px;color:#2a2a2a;transform:scaleX(0.952);transform-origin:right;">memberforex.com[d]</div>
<svg style="position:absolute;left:7px;top:263.30px" width="7" height="7" viewBox="0 0 7 7"><path d="M0.6 0.4 H3.6 L5 1.8 V5.8 H0.6 Z" fill="#ffffff" stroke="#9a9a9a" stroke-width="0.5"/><path d="M3.6 0.4 V1.8 H5" fill="none" stroke="#9a9a9a" stroke-width="0.4"/><circle cx="4.7" cy="5.2" r="1.5" fill="#e8502a"/></svg>
<div class="t" style="left:19.20px;top:264.05px;font-size:5.0px;line-height:5.0px;color:#2a2a2a;transform:scaleX(0.889);transform-origin:left;">651128</div>
<div class="t" style="left:99.73px;top:264.05px;font-size:5.0px;line-height:5.0px;color:#2a2a2a;transform:scaleX(0.859);transform-origin:right;">2025.04.20 17:54:57</div>
<div class="t" style="left:178.50px;top:264.05px;font-size:5.0px;line-height:5.0px;color:#2a2a2a;transform:scaleX(0.853);transform-origin:right;">sell</div>
<div class="t" style="left:205.39px;top:264.05px;font-size:5.0px;line-height:5.0px;color:#2a2a2a;transform:scaleX(0.799);transform-origin:right;">70.37</div>
<div class="t" style="left:240.54px;top:263.90px;font-size:5.3px;line-height:5.3px;color:#2a2a2a;transform:scaleX(0.943);transform-origin:right;">btcusdp</div>
<div class="t" style="left:278.25px;top:264.05px;font-size:5.0px;line-height:5.0px;color:#2a2a2a;transform:scaleX(0.868);transform-origin:right;">84587.40</div>
<div class="t" style="left:318.65px;top:264.05px;font-size:5.0px;line-height:5.0px;color:#1e1e1e;transform:scaleX(0.858);transform-origin:right;">84580.80</div>
<div class="t" style="left:359.55px;top:264.05px;font-size:5.0px;line-height:5.0px;color:#2a2a2a;transform:scaleX(0.902);transform-origin:right;">83976.99</div>
<div class="t" style="left:423.03px;top:264.05px;font-size:5.0px;line-height:5.0px;color:#2a2a2a;transform:scaleX(0.859);transform-origin:right;">2025.04.20 17:55:49</div>
<div class="t" style="left:488.15px;top:264.05px;font-size:5.0px;line-height:5.0px;color:#2a2a2a;transform:scaleX(0.851);transform-origin:right;">84580.80</div>
<div class="t" style="left:532.79px;top:264.05px;font-size:5.0px;line-height:5.0px;color:#2a2a2a;transform:scaleX(0.870);transform-origin:right;">-281.48</div>
<div class="t" style="left:580.02px;top:264.05px;font-size:5.0px;line-height:5.0px;color:#2a2a2a;transform:scaleX(0.899);transform-origin:right;">0.00</div>
<div class="t" style="left:619.21px;top:264.05px;font-size:5.0px;line-height:5.0px;color:#2a2a2a;transform:scaleX(0.930);transform-origin:right;">464.44</div>
<div class="t" style="left:709.66px;top:263.90px;font-size:5.3px;line-height:5.3px;color:#2a2a2a;transform:scaleX(0.952);transform-origin:right;">memberforex.com[d]</div>
<svg style="position:absolute;left:7px;top:271.30px" width="7" height="7" viewBox="0 0 7 7"><path d="M0.6 0.4 H3.6 L5 1.8 V5.8 H0.6 Z" fill="#ffffff" stroke="#9a9a9a" stroke-width="0.5"/><path d="M3.6 0.4 V1.8 H5" fill="none" stroke="#9a9a9a" stroke-width="0.4"/><circle cx="4.7" cy="5.2" r="1.5" fill="#e8502a"/></svg>
<div class="t" style="left:19.20px;top:272.05px;font-size:5.0px;line-height:5.0px;color:#2a2a2a;transform:scaleX(0.889);transform-origin:left;">651128</div>
<div class="t" style="left:99.73px;top:272.05px;font-size:5.0px;line-height:5.0px;color:#2a2a2a;transform:scaleX(0.859);transform-origin:right;">2025.04.20 17:56:03</div>
<div class="t" style="left:178.50px;top:272.05px;font-size:5.0px;line-height:5.0px;color:#2a2a2a;transform:scaleX(0.853);transform-origin:right;">sell</div>
<div class="t" style="left:205.39px;top:272.05px;font-size:5.0px;line-height:5.0px;color:#2a2a2a;transform:scaleX(0.799);transform-origin:right;">70.39</div>
<div class="t" style="left:240.54px;top:271.90px;font-size:5.3px;line-height:5.3px;color:#2a2a2a;transform:scaleX(0.943);transform-origin:right;">btcusdp</div>
<div class="t" style="left:278.25px;top:272.05px;font-size:5.0px;line-height:5.0px;color:#2a2a2a;transform:scaleX(0.868);transform-origin:right;">84602.40</div>
<div class="t" style="left:318.65px;top:272.05px;font-size:5.0px;line-height:5.0px;color:#1e1e1e;transform:scaleX(0.858);transform-origin:right;">84592.10</div>
<div class="t" style="left:359.55px;top:272.05px;font-size:5.0px;line-height:5.0px;color:#2a2a2a;transform:scaleX(0.902);transform-origin:right;">83988.29</div>
<div class="t" style="left:423.03px;top:272.05px;font-size:5.0px;line-height:5.0px;color:#2a2a2a;transform:scaleX(0.859);transform-origin:right;">2025.04.20 17:57:39</div>
<div class="t" style="left:488.15px;top:272.05px;font-size:5.0px;line-height:5.0px;color:#2a2a2a;transform:scaleX(0.851);transform-origin:right;">84592.10</div>
<div class="t" style="left:532.79px;top:272.05px;font-size:5.0px;line-height:5.0px;color:#2a2a2a;transform:scaleX(0.870);transform-origin:right;">-281.56</div>
<div class="t" style="left:580.02px;top:272.05px;font-size:5.0px;line-height:5.0px;color:#2a2a2a;transform:scaleX(0.899);transform-origin:right;">0.00</div>
<div class="t" style="left:619.21px;top:272.05px;font-size:5.0px;line-height:5.0px;color:#2a2a2a;transform:scaleX(0.930);transform-origin:right;">725.02</div>
<div class="t" style="left:709.66px;top:271.90px;font-size:5.3px;line-height:5.3px;color:#2a2a2a;transform:scaleX(0.952);transform-origin:right;">memberforex.com[d]</div>
<svg style="position:absolute;left:7px;top:279.30px" width="7" height="7" viewBox="0 0 7 7"><path d="M0.6 0.4 H3.6 L5 1.8 V5.8 H0.6 Z" fill="#ffffff" stroke="#9a9a9a" stroke-width="0.5"/><path d="M3.6 0.4 V1.8 H5" fill="none" stroke="#9a9a9a" stroke-width="0.4"/><circle cx="4.7" cy="5.2" r="1.5" fill="#e8502a"/></svg>
<div class="t" style="left:19.20px;top:280.05px;font-size:5.0px;line-height:5.0px;color:#2a2a2a;transform:scaleX(0.889);transform-origin:left;">651128</div>
<div class="t" style="left:99.73px;top:280.05px;font-size:5.0px;line-height:5.0px;color:#2a2a2a;transform:scaleX(0.859);transform-origin:right;">2025.04.20 17:57:52</div>
<div class="t" style="left:178.50px;top:280.05px;font-size:5.0px;line-height:5.0px;color:#2a2a2a;transform:scaleX(0.853);transform-origin:right;">sell</div>
<div class="t" style="left:205.39px;top:280.05px;font-size:5.0px;line-height:5.0px;color:#2a2a2a;transform:scaleX(0.799);transform-origin:right;">70.43</div>
<div class="t" style="left:240.54px;top:279.90px;font-size:5.3px;line-height:5.3px;color:#2a2a2a;transform:scaleX(0.943);transform-origin:right;">btcusdp</div>
<div class="t" style="left:278.25px;top:280.05px;font-size:5.0px;line-height:5.0px;color:#2a2a2a;transform:scaleX(0.868);transform-origin:right;">84597.00</div>
<div class="t" style="left:318.65px;top:280.05px;font-size:5.0px;line-height:5.0px;color:#1e1e1e;transform:scaleX(0.858);transform-origin:right;">84565.20</div>
<div class="t" style="left:359.55px;top:280.05px;font-size:5.0px;line-height:5.0px;color:#2a2a2a;transform:scaleX(0.902);transform-origin:right;">83961.39</div>
<div class="t" style="left:423.03px;top:280.05px;font-size:5.0px;line-height:5.0px;color:#2a2a2a;transform:scaleX(0.859);transform-origin:right;">2025.04.20 18:00:25</div>
<div class="t" style="left:488.15px;top:280.05px;font-size:5.0px;line-height:5.0px;color:#2a2a2a;transform:scaleX(0.851);transform-origin:right;">84565.20</div>
<div class="t" style="left:532.79px;top:280.05px;font-size:5.0px;line-height:5.0px;color:#2a2a2a;transform:scaleX(0.870);transform-origin:right;">-281.72</div>
<div class="t" style="left:580.02px;top:280.05px;font-size:5.0px;line-height:5.0px;color:#2a2a2a;transform:scaleX(0.899);transform-origin:right;">0.00</div>
<div class="t" style="left:615.04px;top:280.05px;font-size:5.0px;line-height:5.0px;color:#2a2a2a;transform:scaleX(0.930);transform-origin:right;">2 239.67</div>
<div class="t" style="left:709.66px;top:279.90px;font-size:5.3px;line-height:5.3px;color:#2a2a2a;transform:scaleX(0.952);transform-origin:right;">memberforex.com[d]</div>
<svg style="position:absolute;left:7px;top:287.30px" width="7" height="7" viewBox="0 0 7 7"><path d="M0.6 0.4 H3.6 L5 1.8 V5.8 H0.6 Z" fill="#ffffff" stroke="#9a9a9a" stroke-width="0.5"/><path d="M3.6 0.4 V1.8 H5" fill="none" stroke="#9a9a9a" stroke-width="0.4"/><circle cx="4.7" cy="5.2" r="1.5" fill="#2a8ae8"/></svg>
<div class="t" style="left:19.20px;top:288.05px;font-size:5.0px;line-height:5.0px;color:#2a2a2a;transform:scaleX(0.889);transform-origin:left;">651128</div>
<div class="t" style="left:99.73px;top:288.05px;font-size:5.0px;line-height:5.0px;color:#2a2a2a;transform:scaleX(0.859);transform-origin:right;">2025.04.20 18:03:27</div>
<div class="t" style="left:177.94px;top:288.05px;font-size:5.0px;line-height:5.0px;color:#2a2a2a;transform:scaleX(0.868);transform-origin:right;">buy</div>
<div class="t" style="left:205.39px;top:288.05px;font-size:5.0px;line-height:5.0px;color:#2a2a2a;transform:scaleX(0.799);transform-origin:right;">70.62</div>
<div class="t" style="left:240.54px;top:287.90px;font-size:5.3px;line-height:5.3px;color:#2a2a2a;transform:scaleX(0.943);transform-origin:right;">btcusdp</div>
<div class="t" style="left:278.25px;top:288.05px;font-size:5.0px;line-height:5.0px;color:#2a2a2a;transform:scaleX(0.868);transform-origin:right;">84513.00</div>
<div class="t" style="left:318.65px;top:288.05px;font-size:5.0px;line-height:5.0px;color:#1e1e1e;transform:scaleX(0.858);transform-origin:right;">84519.40</div>
<div class="t" style="left:359.55px;top:288.05px;font-size:5.0px;line-height:5.0px;color:#2a2a2a;transform:scaleX(0.902);transform-origin:right;">85123.21</div>
<div class="t" style="left:423.03px;top:288.05px;font-size:5.0px;line-height:5.0px;color:#2a2a2a;transform:scaleX(0.859);transform-origin:right;">2025.04.20 18:03:38</div>
<div class="t" style="left:488.15px;top:288.05px;font-size:5.0px;line-height:5.0px;color:#2a2a2a;transform:scaleX(0.851);transform-origin:right;">84519.40</div>
<div class="t" style="left:532.79px;top:288.05px;font-size:5.0px;line-height:5.0px;color:#2a2a2a;transform:scaleX(0.870);transform-origin:right;">-282.48</div>
<div class="t" style="left:580.02px;top:288.05px;font-size:5.0px;line-height:5.0px;color:#2a2a2a;transform:scaleX(0.899);transform-origin:right;">0.00</div>
<div class="t" style="left:619.21px;top:288.05px;font-size:5.0px;line-height:5.0px;color:#2a2a2a;transform:scaleX(0.930);transform-origin:right;">451.97</div>
<div class="t" style="left:709.66px;top:287.90px;font-size:5.3px;line-height:5.3px;color:#2a2a2a;transform:scaleX(0.952);transform-origin:right;">memberforex.com[d]</div>
<svg style="position:absolute;left:7px;top:295.30px" width="7" height="7" viewBox="0 0 7 7"><path d="M0.6 0.4 H3.6 L5 1.8 V5.8 H0.6 Z" fill="#ffffff" stroke="#9a9a9a" stroke-width="0.5"/><path d="M3.6 0.4 V1.8 H5" fill="none" stroke="#9a9a9a" stroke-width="0.4"/><circle cx="4.7" cy="5.2" r="1.5" fill="#2a8ae8"/></svg>
<div class="t" style="left:19.20px;top:296.05px;font-size:5.0px;line-height:5.0px;color:#2a2a2a;transform:scaleX(0.889);transform-origin:left;">651129</div>
<div class="t" style="left:99.73px;top:296.05px;font-size:5.0px;line-height:5.0px;color:#2a2a2a;transform:scaleX(0.859);transform-origin:right;">2025.04.20 18:04:02</div>
<div class="t" style="left:177.94px;top:296.05px;font-size:5.0px;line-height:5.0px;color:#2a2a2a;transform:scaleX(0.868);transform-origin:right;">buy</div>
<div class="t" style="left:205.39px;top:296.05px;font-size:5.0px;line-height:5.0px;color:#2a2a2a;transform:scaleX(0.799);transform-origin:right;">70.64</div>
<div class="t" style="left:240.54px;top:295.90px;font-size:5.3px;line-height:5.3px;color:#2a2a2a;transform:scaleX(0.943);transform-origin:right;">btcusdp</div>
<div class="t" style="left:278.25px;top:296.05px;font-size:5.0px;line-height:5.0px;color:#2a2a2a;transform:scaleX(0.868);transform-origin:right;">84509.50</div>
<div class="t" style="left:318.65px;top:296.05px;font-size:5.0px;line-height:5.0px;color:#1e1e1e;transform:scaleX(0.858);transform-origin:right;">84529.30</div>
<div class="t" style="left:359.92px;top:296.05px;font-size:5.0px;line-height:5.0px;color:#2a2a2a;transform:scaleX(0.918);transform-origin:right;">85133.11</div>
<div class="t" style="left:423.03px;top:296.05px;font-size:5.0px;line-height:5.0px;color:#2a2a2a;transform:scaleX(0.859);transform-origin:right;">2025.04.20 18:04:22</div>
<div class="t" style="left:488.15px;top:296.05px;font-size:5.0px;line-height:5.0px;color:#2a2a2a;transform:scaleX(0.851);transform-origin:right;">84529.30</div>
<div class="t" style="left:532.79px;top:296.05px;font-size:5.0px;line-height:5.0px;color:#2a2a2a;transform:scaleX(0.870);transform-origin:right;">-282.56</div>
<div class="t" style="left:580.02px;top:296.05px;font-size:5.0px;line-height:5.0px;color:#2a2a2a;transform:scaleX(0.899);transform-origin:right;">0.00</div>
<div class="t" style="left:615.04px;top:296.05px;font-size:5.0px;line-height:5.0px;color:#2a2a2a;transform:scaleX(0.930);transform-origin:right;">1 398.67</div>
<div class="t" style="left:709.66px;top:295.90px;font-size:5.3px;line-height:5.3px;color:#2a2a2a;transform:scaleX(0.952);transform-origin:right;">memberforex.com[d]</div>
<svg style="position:absolute;left:7px;top:303.30px" width="7" height="7" viewBox="0 0 7 7"><path d="M0.6 0.4 H3.6 L5 1.8 V5.8 H0.6 Z" fill="#ffffff" stroke="#9a9a9a" stroke-width="0.5"/><path d="M3.6 0.4 V1.8 H5" fill="none" stroke="#9a9a9a" stroke-width="0.4"/><circle cx="4.7" cy="5.2" r="1.5" fill="#2a8ae8"/></svg>
<div class="t" style="left:19.20px;top:304.05px;font-size:5.0px;line-height:5.0px;color:#2a2a2a;transform:scaleX(0.889);transform-origin:left;">651129</div>
<div class="t" style="left:99.73px;top:304.05px;font-size:5.0px;line-height:5.0px;color:#2a2a2a;transform:scaleX(0.859);transform-origin:right;">2025.04.20 18:07:12</div>
<div class="t" style="left:177.94px;top:304.05px;font-size:5.0px;line-height:5.0px;color:#2a2a2a;transform:scaleX(0.868);transform-origin:right;">buy</div>
<div class="t" style="left:205.39px;top:304.05px;font-size:5.0px;line-height:5.0px;color:#2a2a2a;transform:scaleX(0.799);transform-origin:right;">70.75</div>
<div class="t" style="left:240.54px;top:303.90px;font-size:5.3px;line-height:5.3px;color:#2a2a2a;transform:scaleX(0.943);transform-origin:right;">btcusdp</div>
<div class="t" style="left:278.25px;top:304.05px;font-size:5.0px;line-height:5.0px;color:#2a2a2a;transform:scaleX(0.868);transform-origin:right;">84466.80</div>
<div class="t" style="left:318.65px;top:304.05px;font-size:5.0px;line-height:5.0px;color:#1e1e1e;transform:scaleX(0.858);transform-origin:right;">84484.70</div>
<div class="t" style="left:359.55px;top:304.05px;font-size:5.0px;line-height:5.0px;color:#2a2a2a;transform:scaleX(0.902);transform-origin:right;">85088.31</div>
<div class="t" style="left:423.03px;top:304.05px;font-size:5.0px;line-height:5.0px;color:#2a2a2a;transform:scaleX(0.859);transform-origin:right;">2025.04.20 18:07:23</div>
<div class="t" style="left:488.15px;top:304.05px;font-size:5.0px;line-height:5.0px;color:#2a2a2a;transform:scaleX(0.851);transform-origin:right;">84484.70</div>
<div class="t" style="left:532.79px;top:304.05px;font-size:5.0px;line-height:5.0px;color:#2a2a2a;transform:scaleX(0.870);transform-origin:right;">-283.00</div>
<div class="t" style="left:580.02px;top:304.05px;font-size:5.0px;line-height:5.0px;color:#2a2a2a;transform:scaleX(0.899);transform-origin:right;">0.00</div>
<div class="t" style="left:615.04px;top:304.05px;font-size:5.0px;line-height:5.0px;color:#2a2a2a;transform:scaleX(0.930);transform-origin:right;">1 266.43</div>
<div class="t" style="left:709.66px;top:303.90px;font-size:5.3px;line-height:5.3px;color:#2a2a2a;transform:scaleX(0.952);transform-origin:right;">memberforex.com[d]</div>
<svg style="position:absolute;left:7px;top:311.30px" width="7" height="7" viewBox="0 0 7 7"><path d="M0.6 0.4 H3.6 L5 1.8 V5.8 H0.6 Z" fill="#ffffff" stroke="#9a9a9a" stroke-width="0.5"/><path d="M3.6 0.4 V1.8 H5" fill="none" stroke="#9a9a9a" stroke-width="0.4"/><circle cx="4.7" cy="5.2" r="1.5" fill="#2a8ae8"/></svg>
<div class="t" style="left:19.20px;top:312.05px;font-size:5.0px;line-height:5.0px;color:#2a2a2a;transform:scaleX(0.889);transform-origin:left;">651130</div>
<div class="t" style="left:99.73px;top:312.05px;font-size:5.0px;line-height:5.0px;color:#2a2a2a;transform:scaleX(0.859);transform-origin:right;">2025.04.20 18:08:34</div>
<div class="t" style="left:177.94px;top:312.05px;font-size:5.0px;line-height:5.0px;color:#2a2a2a;transform:scaleX(0.868);transform-origin:right;">buy</div>
<div class="t" style="left:205.39px;top:312.05px;font-size:5.0px;line-height:5.0px;color:#2a2a2a;transform:scaleX(0.799);transform-origin:right;">70.79</div>
<div class="t" style="left:240.54px;top:311.90px;font-size:5.3px;line-height:5.3px;color:#2a2a2a;transform:scaleX(0.943);transform-origin:right;">btcusdp</div>
<div class="t" style="left:278.25px;top:312.05px;font-size:5.0px;line-height:5.0px;color:#2a2a2a;transform:scaleX(0.868);transform-origin:right;">84437.60</div>
<div class="t" style="left:318.65px;top:312.05px;font-size:5.0px;line-height:5.0px;color:#1e1e1e;transform:scaleX(0.858);transform-origin:right;">84449.40</div>
<div class="t" style="left:359.55px;top:312.05px;font-size:5.0px;line-height:5.0px;color:#2a2a2a;transform:scaleX(0.902);transform-origin:right;">85050.21</div>
<div class="t" style="left:423.03px;top:312.05px;font-size:5.0px;line-height:5.0px;color:#2a2a2a;transform:scaleX(0.859);transform-origin:right;">2025.04.20 18:09:05</div>
<div class="t" style="left:488.15px;top:312.05px;font-size:5.0px;line-height:5.0px;color:#2a2a2a;transform:scaleX(0.851);transform-origin:right;">84449.40</div>
<div class="t" style="left:532.79px;top:312.05px;font-size:5.0px;line-height:5.0px;color:#2a2a2a;transform:scaleX(0.870);transform-origin:right;">-283.16</div>
<div class="t" style="left:580.02px;top:312.05px;font-size:5.0px;line-height:5.0px;color:#2a2a2a;transform:scaleX(0.899);transform-origin:right;">0.00</div>
<div class="t" style="left:619.21px;top:312.05px;font-size:5.0px;line-height:5.0px;color:#2a2a2a;transform:scaleX(0.930);transform-origin:right;">835.32</div>
<div class="t" style="left:709.66px;top:311.90px;font-size:5.3px;line-height:5.3px;color:#2a2a2a;transform:scaleX(0.952);transform-origin:right;">memberforex.com[d]</div>
<svg style="position:absolute;left:7px;top:319.30px" width="7" height="7" viewBox="0 0 7 7"><path d="M0.6 0.4 H3.6 L5 1.8 V5.8 H0.6 Z" fill="#ffffff" stroke="#9a9a9a" stroke-width="0.5"/><path d="M3.6 0.4 V1.8 H5" fill="none" stroke="#9a9a9a" stroke-width="0.4"/><circle cx="4.7" cy="5.2" r="1.5" fill="#2a8ae8"/></svg>
<div class="t" style="left:19.20px;top:320.05px;font-size:5.0px;line-height:5.0px;color:#2a2a2a;transform:scaleX(0.889);transform-origin:left;">651130</div>
<div class="t" style="left:99.73px;top:320.05px;font-size:5.0px;line-height:5.0px;color:#2a2a2a;transform:scaleX(0.859);transform-origin:right;">2025.04.20 18:10:10</div>
<div class="t" style="left:177.94px;top:320.05px;font-size:5.0px;line-height:5.0px;color:#2a2a2a;transform:scaleX(0.868);transform-origin:right;">buy</div>
<div class="t" style="left:205.39px;top:320.05px;font-size:5.0px;line-height:5.0px;color:#2a2a2a;transform:scaleX(0.799);transform-origin:right;">70.84</div>
<div class="t" style="left:240.54px;top:319.90px;font-size:5.3px;line-height:5.3px;color:#2a2a2a;transform:scaleX(0.943);transform-origin:right;">btcusdp</div>
<div class="t" style="left:278.25px;top:320.05px;font-size:5.0px;line-height:5.0px;color:#2a2a2a;transform:scaleX(0.868);transform-origin:right;">84421.60</div>
<div class="t" style="left:318.65px;top:320.05px;font-size:5.0px;line-height:5.0px;color:#1e1e1e;transform:scaleX(0.858);transform-origin:right;">84427.50</div>
<div class="t" style="left:359.55px;top:320.05px;font-size:5.0px;line-height:5.0px;color:#2a2a2a;transform:scaleX(0.902);transform-origin:right;">85031.31</div>
<div class="t" style="left:423.03px;top:320.05px;font-size:5.0px;line-height:5.0px;color:#2a2a2a;transform:scaleX(0.859);transform-origin:right;">2025.04.20 18:10:15</div>
<div class="t" style="left:488.15px;top:320.05px;font-size:5.0px;line-height:5.0px;color:#2a2a2a;transform:scaleX(0.851);transform-origin:right;">84427.50</div>
<div class="t" style="left:532.79px;top:320.05px;font-size:5.0px;line-height:5.0px;color:#2a2a2a;transform:scaleX(0.870);transform-origin:right;">-283.36</div>
<div class="t" style="left:580.02px;top:320.05px;font-size:5.0px;line-height:5.0px;color:#2a2a2a;transform:scaleX(0.899);transform-origin:right;">0.00</div>
<div class="t" style="left:619.21px;top:320.05px;font-size:5.0px;line-height:5.0px;color:#2a2a2a;transform:scaleX(0.930);transform-origin:right;">417.96</div>
<div class="t" style="left:709.66px;top:319.90px;font-size:5.3px;line-height:5.3px;color:#2a2a2a;transform:scaleX(0.952);transform-origin:right;">memberforex.com[d]</div>
<svg style="position:absolute;left:7px;top:327.30px" width="7" height="7" viewBox="0 0 7 7"><path d="M0.6 0.4 H3.6 L5 1.8 V5.8 H0.6 Z" fill="#ffffff" stroke="#9a9a9a" stroke-width="0.5"/><path d="M3.6 0.4 V1.8 H5" fill="none" stroke="#9a9a9a" stroke-width="0.4"/><circle cx="4.7" cy="5.2" r="1.5" fill="#2a8ae8"/></svg>
<div class="t" style="left:19.20px;top:328.05px;font-size:5.0px;line-height:5.0px;color:#2a2a2a;transform:scaleX(0.889);transform-origin:left;">651129</div>
<div class="t" style="left:99.73px;top:328.05px;font-size:5.0px;line-height:5.0px;color:#2a2a2a;transform:scaleX(0.859);transform-origin:right;">2025.04.20 18:07:45</div>
<div class="t" style="left:177.94px;top:328.05px;font-size:5.0px;line-height:5.0px;color:#2a2a2a;transform:scaleX(0.868);transform-origin:right;">buy</div>
<div class="t" style="left:205.39px;top:328.05px;font-size:5.0px;line-height:5.0px;color:#2a2a2a;transform:scaleX(0.799);transform-origin:right;">70.84</div>
<div class="t" style="left:240.54px;top:327.90px;font-size:5.3px;line-height:5.3px;color:#2a2a2a;transform:scaleX(0.943);transform-origin:right;">btcusdp</div>
<div class="t" style="left:278.25px;top:328.05px;font-size:5.0px;line-height:5.0px;color:#2a2a2a;transform:scaleX(0.868);transform-origin:right;">84475.10</div>
<div class="t" style="left:318.65px;top:328.05px;font-size:5.0px;line-height:5.0px;color:#1e1e1e;transform:scaleX(0.858);transform-origin:right;">84471.30</div>
<div class="t" style="left:359.55px;top:328.05px;font-size:5.0px;line-height:5.0px;color:#2a2a2a;transform:scaleX(0.902);transform-origin:right;">85075.10</div>
<div class="t" style="left:423.03px;top:328.05px;font-size:5.0px;line-height:5.0px;color:#2a2a2a;transform:scaleX(0.859);transform-origin:right;">2025.04.20 18:07:45</div>
<div class="t" style="left:488.15px;top:328.05px;font-size:5.0px;line-height:5.0px;color:#2a2a2a;transform:scaleX(0.851);transform-origin:right;">84471.30</div>
<div class="t" style="left:532.79px;top:328.05px;font-size:5.0px;line-height:5.0px;color:#2a2a2a;transform:scaleX(0.870);transform-origin:right;">-283.36</div>
<div class="t" style="left:580.02px;top:328.05px;font-size:5.0px;line-height:5.0px;color:#2a2a2a;transform:scaleX(0.899);transform-origin:right;">0.00</div>
<div class="t" style="left:617.54px;top:328.05px;font-size:5.0px;line-height:5.0px;color:#2a2a2a;transform:scaleX(0.930);transform-origin:right;">-269.19</div>
<div class="t" style="left:709.66px;top:327.90px;font-size:5.3px;line-height:5.3px;color:#2a2a2a;transform:scaleX(0.952);transform-origin:right;">memberforex.com[d]</div>
<svg style="position:absolute;left:7px;top:335.30px" width="7" height="7" viewBox="0 0 7 7"><path d="M0.6 0.4 H3.6 L5 1.8 V5.8 H0.6 Z" fill="#ffffff" stroke="#9a9a9a" stroke-width="0.5"/><path d="M3.6 0.4 V1.8 H5" fill="none" stroke="#9a9a9a" stroke-width="0.4"/><circle cx="4.7" cy="5.2" r="1.5" fill="#2a8ae8"/></svg>
<div class="t" style="left:19.20px;top:336.05px;font-size:5.0px;line-height:5.0px;color:#2a2a2a;transform:scaleX(0.889);transform-origin:left;">651131</div>
<div class="t" style="left:99.73px;top:336.05px;font-size:5.0px;line-height:5.0px;color:#2a2a2a;transform:scaleX(0.859);transform-origin:right;">2025.04.20 18:10:32</div>
<div class="t" style="left:177.94px;top:336.05px;font-size:5.0px;line-height:5.0px;color:#2a2a2a;transform:scaleX(0.868);transform-origin:right;">buy</div>
<div class="t" style="left:205.39px;top:336.05px;font-size:5.0px;line-height:5.0px;color:#2a2a2a;transform:scaleX(0.799);transform-origin:right;">70.86</div>
<div class="t" style="left:240.54px;top:335.90px;font-size:5.3px;line-height:5.3px;color:#2a2a2a;transform:scaleX(0.943);transform-origin:right;">btcusdp</div>
<div class="t" style="left:278.25px;top:336.05px;font-size:5.0px;line-height:5.0px;color:#2a2a2a;transform:scaleX(0.868);transform-origin:right;">84421.10</div>
<div class="t" style="left:318.65px;top:336.05px;font-size:5.0px;line-height:5.0px;color:#1e1e1e;transform:scaleX(0.858);transform-origin:right;">84440.30</div>
<div class="t" style="left:359.92px;top:336.05px;font-size:5.0px;line-height:5.0px;color:#2a2a2a;transform:scaleX(0.918);transform-origin:right;">85044.11</div>
<div class="t" style="left:423.03px;top:336.05px;font-size:5.0px;line-height:5.0px;color:#2a2a2a;transform:scaleX(0.859);transform-origin:right;">2025.04.20 18:10:55</div>
<div class="t" style="left:488.15px;top:336.05px;font-size:5.0px;line-height:5.0px;color:#2a2a2a;transform:scaleX(0.851);transform-origin:right;">84440.30</div>
<div class="t" style="left:532.79px;top:336.05px;font-size:5.0px;line-height:5.0px;color:#2a2a2a;transform:scaleX(0.870);transform-origin:right;">-283.44</div>
<div class="t" style="left:580.02px;top:336.05px;font-size:5.0px;line-height:5.0px;color:#2a2a2a;transform:scaleX(0.899);transform-origin:right;">0.00</div>
<div class="t" style="left:615.04px;top:336.05px;font-size:5.0px;line-height:5.0px;color:#2a2a2a;transform:scaleX(0.930);transform-origin:right;">1 360.51</div>
<div class="t" style="left:709.66px;top:335.90px;font-size:5.3px;line-height:5.3px;color:#2a2a2a;transform:scaleX(0.952);transform-origin:right;">memberforex.com[d]</div>
<svg style="position:absolute;left:7px;top:343.30px" width="7" height="7" viewBox="0 0 7 7"><path d="M0.6 0.4 H3.6 L5 1.8 V5.8 H0.6 Z" fill="#ffffff" stroke="#9a9a9a" stroke-width="0.5"/><path d="M3.6 0.4 V1.8 H5" fill="none" stroke="#9a9a9a" stroke-width="0.4"/><circle cx="4.7" cy="5.2" r="1.5" fill="#2a8ae8"/></svg>
<div class="t" style="left:19.20px;top:344.05px;font-size:5.0px;line-height:5.0px;color:#2a2a2a;transform:scaleX(0.889);transform-origin:left;">651131</div>
<div class="t" style="left:100.10px;top:344.05px;font-size:5.0px;line-height:5.0px;color:#2a2a2a;transform:scaleX(0.866);transform-origin:right;">2025.04.20 18:11:24</div>
<div class="t" style="left:177.94px;top:344.05px;font-size:5.0px;line-height:5.0px;color:#2a2a2a;transform:scaleX(0.868);transform-origin:right;">buy</div>
<div class="t" style="left:205.39px;top:344.05px;font-size:5.0px;line-height:5.0px;color:#2a2a2a;transform:scaleX(0.799);transform-origin:right;">70.96</div>
<div class="t" style="left:240.54px;top:343.90px;font-size:5.3px;line-height:5.3px;color:#2a2a2a;transform:scaleX(0.943);transform-origin:right;">btcusdp</div>
<div class="t" style="left:278.25px;top:344.05px;font-size:5.0px;line-height:5.0px;color:#2a2a2a;transform:scaleX(0.868);transform-origin:right;">84437.60</div>
<div class="t" style="left:318.65px;top:344.05px;font-size:5.0px;line-height:5.0px;color:#1e1e1e;transform:scaleX(0.858);transform-origin:right;">84489.30</div>
<div class="t" style="left:359.92px;top:344.05px;font-size:5.0px;line-height:5.0px;color:#2a2a2a;transform:scaleX(0.918);transform-origin:right;">85093.11</div>
<div class="t" style="left:423.03px;top:344.05px;font-size:5.0px;line-height:5.0px;color:#2a2a2a;transform:scaleX(0.859);transform-origin:right;">2025.04.20 18:12:05</div>
<div class="t" style="left:488.15px;top:344.05px;font-size:5.0px;line-height:5.0px;color:#2a2a2a;transform:scaleX(0.851);transform-origin:right;">84489.30</div>
<div class="t" style="left:532.79px;top:344.05px;font-size:5.0px;line-height:5.0px;color:#2a2a2a;transform:scaleX(0.870);transform-origin:right;">-283.84</div>
<div class="t" style="left:580.02px;top:344.05px;font-size:5.0px;line-height:5.0px;color:#2a2a2a;transform:scaleX(0.899);transform-origin:right;">0.00</div>
<div class="t" style="left:615.04px;top:344.05px;font-size:5.0px;line-height:5.0px;color:#2a2a2a;transform:scaleX(0.930);transform-origin:right;">3 668.63</div>
<div class="t" style="left:709.66px;top:343.90px;font-size:5.3px;line-height:5.3px;color:#2a2a2a;transform:scaleX(0.952);transform-origin:right;">memberforex.com[d]</div>
<svg style="position:absolute;left:7px;top:351.30px" width="7" height="7" viewBox="0 0 7 7"><path d="M0.6 0.4 H3.6 L5 1.8 V5.8 H0.6 Z" fill="#ffffff" stroke="#9a9a9a" stroke-width="0.5"/><path d="M3.6 0.4 V1.8 H5" fill="none" stroke="#9a9a9a" stroke-width="0.4"/><circle cx="4.7" cy="5.2" r="1.5" fill="#2a8ae8"/></svg>
<div class="t" style="left:19.20px;top:352.05px;font-size:5.0px;line-height:5.0px;color:#2a2a2a;transform:scaleX(0.889);transform-origin:left;">651131</div>
<div class="t" style="left:99.73px;top:352.05px;font-size:5.0px;line-height:5.0px;color:#2a2a2a;transform:scaleX(0.859);transform-origin:right;">2025.04.20 18:12:33</div>
<div class="t" style="left:177.94px;top:352.05px;font-size:5.0px;line-height:5.0px;color:#2a2a2a;transform:scaleX(0.868);transform-origin:right;">buy</div>
<div class="t" style="left:205.39px;top:352.05px;font-size:5.0px;line-height:5.0px;color:#2a2a2a;transform:scaleX(0.799);transform-origin:right;">71.29</div>
<div class="t" style="left:240.54px;top:351.90px;font-size:5.3px;line-height:5.3px;color:#2a2a2a;transform:scaleX(0.943);transform-origin:right;">btcusdp</div>
<div class="t" style="left:278.25px;top:352.05px;font-size:5.0px;line-height:5.0px;color:#2a2a2a;transform:scaleX(0.868);transform-origin:right;">84454.60</div>
<div class="t" style="left:318.65px;top:352.05px;font-size:5.0px;line-height:5.0px;color:#1e1e1e;transform:scaleX(0.858);transform-origin:right;">84465.80</div>
<div class="t" style="left:359.55px;top:352.05px;font-size:5.0px;line-height:5.0px;color:#2a2a2a;transform:scaleX(0.902);transform-origin:right;">85069.61</div>
<div class="t" style="left:423.03px;top:352.05px;font-size:5.0px;line-height:5.0px;color:#2a2a2a;transform:scaleX(0.859);transform-origin:right;">2025.04.20 18:12:50</div>
<div class="t" style="left:488.15px;top:352.05px;font-size:5.0px;line-height:5.0px;color:#2a2a2a;transform:scaleX(0.851);transform-origin:right;">84465.80</div>
<div class="t" style="left:532.79px;top:352.05px;font-size:5.0px;line-height:5.0px;color:#2a2a2a;transform:scaleX(0.870);transform-origin:right;">-285.16</div>
<div class="t" style="left:580.02px;top:352.05px;font-size:5.0px;line-height:5.0px;color:#2a2a2a;transform:scaleX(0.899);transform-origin:right;">0.00</div>
<div class="t" style="left:619.21px;top:352.05px;font-size:5.0px;line-height:5.0px;color:#2a2a2a;transform:scaleX(0.930);transform-origin:right;">798.45</div>
<div class="t" style="left:709.66px;top:351.90px;font-size:5.3px;line-height:5.3px;color:#2a2a2a;transform:scaleX(0.952);transform-origin:right;">memberforex.com[d]</div>
<svg style="position:absolute;left:7px;top:359.30px" width="7" height="7" viewBox="0 0 7 7"><path d="M0.6 0.4 H3.6 L5 1.8 V5.8 H0.6 Z" fill="#ffffff" stroke="#9a9a9a" stroke-width="0.5"/><path d="M3.6 0.4 V1.8 H5" fill="none" stroke="#9a9a9a" stroke-width="0.4"/><circle cx="4.7" cy="5.2" r="1.5" fill="#2a8ae8"/></svg>
<div class="t" style="left:19.20px;top:360.05px;font-size:5.0px;line-height:5.0px;color:#2a2a2a;transform:scaleX(0.889);transform-origin:left;">651132</div>
<div class="t" style="left:99.73px;top:360.05px;font-size:5.0px;line-height:5.0px;color:#2a2a2a;transform:scaleX(0.859);transform-origin:right;">2025.04.20 18:13:00</div>
<div class="t" style="left:177.94px;top:360.05px;font-size:5.0px;line-height:5.0px;color:#2a2a2a;transform:scaleX(0.868);transform-origin:right;">buy</div>
<div class="t" style="left:205.39px;top:360.05px;font-size:5.0px;line-height:5.0px;color:#2a2a2a;transform:scaleX(0.799);transform-origin:right;">71.34</div>
<div class="t" style="left:240.54px;top:359.90px;font-size:5.3px;line-height:5.3px;color:#2a2a2a;transform:scaleX(0.943);transform-origin:right;">btcusdp</div>
<div class="t" style="left:278.25px;top:360.05px;font-size:5.0px;line-height:5.0px;color:#2a2a2a;transform:scaleX(0.868);transform-origin:right;">84468.10</div>
<div class="t" style="left:318.65px;top:360.05px;font-size:5.0px;line-height:5.0px;color:#1e1e1e;transform:scaleX(0.858);transform-origin:right;">84489.30</div>
<div class="t" style="left:359.92px;top:360.05px;font-size:5.0px;line-height:5.0px;color:#2a2a2a;transform:scaleX(0.918);transform-origin:right;">85093.11</div>
<div class="t" style="left:423.03px;top:360.05px;font-size:5.0px;line-height:5.0px;color:#2a2a2a;transform:scaleX(0.859);transform-origin:right;">2025.04.20 18:13:05</div>
<div class="t" style="left:488.15px;top:360.05px;font-size:5.0px;line-height:5.0px;color:#2a2a2a;transform:scaleX(0.851);transform-origin:right;">84489.30</div>
<div class="t" style="left:532.79px;top:360.05px;font-size:5.0px;line-height:5.0px;color:#2a2a2a;transform:scaleX(0.870);transform-origin:right;">-285.36</div>
<div class="t" style="left:580.02px;top:360.05px;font-size:5.0px;line-height:5.0px;color:#2a2a2a;transform:scaleX(0.899);transform-origin:right;">0.00</div>
<div class="t" style="left:615.04px;top:360.05px;font-size:5.0px;line-height:5.0px;color:#2a2a2a;transform:scaleX(0.930);transform-origin:right;">1 512.41</div>
<div class="t" style="left:709.66px;top:359.90px;font-size:5.3px;line-height:5.3px;color:#2a2a2a;transform:scaleX(0.952);transform-origin:right;">memberforex.com[d]</div>
<svg style="position:absolute;left:7px;top:367.30px" width="7" height="7" viewBox="0 0 7 7"><path d="M0.6 0.4 H3.6 L5 1.8 V5.8 H0.6 Z" fill="#ffffff" stroke="#9a9a9a" stroke-width="0.5"/><path d="M3.6 0.4 V1.8 H5" fill="none" stroke="#9a9a9a" stroke-width="0.4"/><circle cx="4.7" cy="5.2" r="1.5" fill="#2a8ae8"/></svg>
<div class="t" style="left:19.20px;top:368.05px;font-size:5.0px;line-height:5.0px;color:#2a2a2a;transform:scaleX(0.889);transform-origin:left;">651132</div>
<div class="t" style="left:99.73px;top:368.05px;font-size:5.0px;line-height:5.0px;color:#2a2a2a;transform:scaleX(0.859);transform-origin:right;">2025.04.20 18:14:00</div>
<div class="t" style="left:177.94px;top:368.05px;font-size:5.0px;line-height:5.0px;color:#2a2a2a;transform:scaleX(0.868);transform-origin:right;">buy</div>
<div class="t" style="left:205.39px;top:368.05px;font-size:5.0px;line-height:5.0px;color:#2a2a2a;transform:scaleX(0.799);transform-origin:right;">71.44</div>
<div class="t" style="left:240.54px;top:367.90px;font-size:5.3px;line-height:5.3px;color:#2a2a2a;transform:scaleX(0.943);transform-origin:right;">btcusdp</div>
<div class="t" style="left:278.25px;top:368.05px;font-size:5.0px;line-height:5.0px;color:#2a2a2a;transform:scaleX(0.868);transform-origin:right;">84481.50</div>
<div class="t" style="left:318.65px;top:368.05px;font-size:5.0px;line-height:5.0px;color:#1e1e1e;transform:scaleX(0.858);transform-origin:right;">84490.30</div>
<div class="t" style="left:359.92px;top:368.05px;font-size:5.0px;line-height:5.0px;color:#2a2a2a;transform:scaleX(0.918);transform-origin:right;">85094.11</div>
<div class="t" style="left:423.03px;top:368.05px;font-size:5.0px;line-height:5.0px;color:#2a2a2a;transform:scaleX(0.859);transform-origin:right;">2025.04.20 18:14:14</div>
<div class="t" style="left:488.15px;top:368.05px;font-size:5.0px;line-height:5.0px;color:#2a2a2a;transform:scaleX(0.851);transform-origin:right;">84490.30</div>
<div class="t" style="left:532.79px;top:368.05px;font-size:5.0px;line-height:5.0px;color:#2a2a2a;transform:scaleX(0.870);transform-origin:right;">-285.76</div>
<div class="t" style="left:580.02px;top:368.05px;font-size:5.0px;line-height:5.0px;color:#2a2a2a;transform:scaleX(0.899);transform-origin:right;">0.00</div>
<div class="t" style="left:619.21px;top:368.05px;font-size:5.0px;line-height:5.0px;color:#2a2a2a;transform:scaleX(0.930);transform-origin:right;">628.67</div>
<div class="t" style="left:709.66px;top:367.90px;font-size:5.3px;line-height:5.3px;color:#2a2a2a;transform:scaleX(0.952);transform-origin:right;">memberforex.com[d]</div>
<svg style="position:absolute;left:7px;top:375.30px" width="7" height="7" viewBox="0 0 7 7"><path d="M0.6 0.4 H3.6 L5 1.8 V5.8 H0.6 Z" fill="#ffffff" stroke="#9a9a9a" stroke-width="0.5"/><path d="M3.6 0.4 V1.8 H5" fill="none" stroke="#9a9a9a" stroke-width="0.4"/><circle cx="4.7" cy="5.2" r="1.5" fill="#2a8ae8"/></svg>
<div class="t" style="left:19.20px;top:376.05px;font-size:5.0px;line-height:5.0px;color:#2a2a2a;transform:scaleX(0.889);transform-origin:left;">651132</div>
<div class="t" style="left:99.73px;top:376.05px;font-size:5.0px;line-height:5.0px;color:#2a2a2a;transform:scaleX(0.859);transform-origin:right;">2025.04.20 18:15:20</div>
<div class="t" style="left:177.94px;top:376.05px;font-size:5.0px;line-height:5.0px;color:#2a2a2a;transform:scaleX(0.868);transform-origin:right;">buy</div>
<div class="t" style="left:205.39px;top:376.05px;font-size:5.0px;line-height:5.0px;color:#2a2a2a;transform:scaleX(0.799);transform-origin:right;">71.47</div>
<div class="t" style="left:240.54px;top:375.90px;font-size:5.3px;line-height:5.3px;color:#2a2a2a;transform:scaleX(0.943);transform-origin:right;">btcusdp</div>
<div class="t" style="left:278.25px;top:376.05px;font-size:5.0px;line-height:5.0px;color:#2a2a2a;transform:scaleX(0.868);transform-origin:right;">84489.50</div>
<div class="t" style="left:318.65px;top:376.05px;font-size:5.0px;line-height:5.0px;color:#1e1e1e;transform:scaleX(0.858);transform-origin:right;">84507.30</div>
<div class="t" style="left:360.66px;top:376.05px;font-size:5.0px;line-height:5.0px;color:#2a2a2a;transform:scaleX(0.952);transform-origin:right;">85111.11</div>
<div class="t" style="left:423.03px;top:376.05px;font-size:5.0px;line-height:5.0px;color:#2a2a2a;transform:scaleX(0.859);transform-origin:right;">2025.04.20 18:15:59</div>
<div class="t" style="left:488.15px;top:376.05px;font-size:5.0px;line-height:5.0px;color:#2a2a2a;transform:scaleX(0.851);transform-origin:right;">84507.30</div>
<div class="t" style="left:532.79px;top:376.05px;font-size:5.0px;line-height:5.0px;color:#2a2a2a;transform:scaleX(0.870);transform-origin:right;">-285.88</div>
<div class="t" style="left:580.02px;top:376.05px;font-size:5.0px;line-height:5.0px;color:#2a2a2a;transform:scaleX(0.899);transform-origin:right;">0.00</div>
<div class="t" style="left:615.04px;top:376.05px;font-size:5.0px;line-height:5.0px;color:#2a2a2a;transform:scaleX(0.930);transform-origin:right;">1 272.17</div>
<div class="t" style="left:709.66px;top:375.90px;font-size:5.3px;line-height:5.3px;color:#2a2a2a;transform:scaleX(0.952);transform-origin:right;">memberforex.com[d]</div>
<svg style="position:absolute;left:7px;top:383.30px" width="7" height="7" viewBox="0 0 7 7"><path d="M0.6 0.4 H3.6 L5 1.8 V5.8 H0.6 Z" fill="#ffffff" stroke="#9a9a9a" stroke-width="0.5"/><path d="M3.6 0.4 V1.8 H5" fill="none" stroke="#9a9a9a" stroke-width="0.4"/><circle cx="4.7" cy="5.2" r="1.5" fill="#2a8ae8"/></svg>
<div class="t" style="left:19.20px;top:384.05px;font-size:5.0px;line-height:5.0px;color:#2a2a2a;transform:scaleX(0.889);transform-origin:left;">651132</div>
<div class="t" style="left:99.73px;top:384.05px;font-size:5.0px;line-height:5.0px;color:#2a2a2a;transform:scaleX(0.859);transform-origin:right;">2025.04.20 18:13:30</div>
<div class="t" style="left:177.94px;top:384.05px;font-size:5.0px;line-height:5.0px;color:#2a2a2a;transform:scaleX(0.868);transform-origin:right;">buy</div>
<div class="t" style="left:205.39px;top:384.05px;font-size:5.0px;line-height:5.0px;color:#2a2a2a;transform:scaleX(0.799);transform-origin:right;">71.47</div>
<div class="t" style="left:240.54px;top:383.90px;font-size:5.3px;line-height:5.3px;color:#2a2a2a;transform:scaleX(0.943);transform-origin:right;">btcusdp</div>
<div class="t" style="left:278.25px;top:384.05px;font-size:5.0px;line-height:5.0px;color:#2a2a2a;transform:scaleX(0.868);transform-origin:right;">84484.80</div>
<div class="t" style="left:318.65px;top:384.05px;font-size:5.0px;line-height:5.0px;color:#1e1e1e;transform:scaleX(0.858);transform-origin:right;">84484.50</div>
<div class="t" style="left:359.55px;top:384.05px;font-size:5.0px;line-height:5.0px;color:#2a2a2a;transform:scaleX(0.902);transform-origin:right;">85088.31</div>
<div class="t" style="left:423.03px;top:384.05px;font-size:5.0px;line-height:5.0px;color:#2a2a2a;transform:scaleX(0.859);transform-origin:right;">2025.04.20 18:13:40</div>
<div class="t" style="left:488.15px;top:384.05px;font-size:5.0px;line-height:5.0px;color:#2a2a2a;transform:scaleX(0.851);transform-origin:right;">84484.50</div>
<div class="t" style="left:532.79px;top:384.05px;font-size:5.0px;line-height:5.0px;color:#2a2a2a;transform:scaleX(0.870);transform-origin:right;">-285.88</div>
<div class="t" style="left:580.02px;top:384.05px;font-size:5.0px;line-height:5.0px;color:#2a2a2a;transform:scaleX(0.899);transform-origin:right;">0.00</div>
<div class="t" style="left:620.32px;top:384.05px;font-size:5.0px;line-height:5.0px;color:#2a2a2a;transform:scaleX(0.930);transform-origin:right;">-21.44</div>
<div class="t" style="left:709.66px;top:383.90px;font-size:5.3px;line-height:5.3px;color:#2a2a2a;transform:scaleX(0.952);transform-origin:right;">memberforex.com[d]</div>
<svg style="position:absolute;left:7px;top:391.30px" width="7" height="7" viewBox="0 0 7 7"><path d="M0.6 0.4 H3.6 L5 1.8 V5.8 H0.6 Z" fill="#ffffff" stroke="#9a9a9a" stroke-width="0.5"/><path d="M3.6 0.4 V1.8 H5" fill="none" stroke="#9a9a9a" stroke-width="0.4"/><circle cx="4.7" cy="5.2" r="1.5" fill="#2a8ae8"/></svg>
<div class="t" style="left:19.20px;top:392.05px;font-size:5.0px;line-height:5.0px;color:#2a2a2a;transform:scaleX(0.889);transform-origin:left;">651133</div>
<div class="t" style="left:99.73px;top:392.05px;font-size:5.0px;line-height:5.0px;color:#2a2a2a;transform:scaleX(0.859);transform-origin:right;">2025.04.20 18:17:05</div>
<div class="t" style="left:177.94px;top:392.05px;font-size:5.0px;line-height:5.0px;color:#2a2a2a;transform:scaleX(0.868);transform-origin:right;">buy</div>
<div class="t" style="left:205.39px;top:392.05px;font-size:5.0px;line-height:5.0px;color:#2a2a2a;transform:scaleX(0.799);transform-origin:right;">71.57</div>
<div class="t" style="left:240.54px;top:391.90px;font-size:5.3px;line-height:5.3px;color:#2a2a2a;transform:scaleX(0.943);transform-origin:right;">btcusdp</div>
<div class="t" style="left:278.25px;top:392.05px;font-size:5.0px;line-height:5.0px;color:#2a2a2a;transform:scaleX(0.868);transform-origin:right;">84413.20</div>
<div class="t" style="left:318.65px;top:392.05px;font-size:5.0px;line-height:5.0px;color:#1e1e1e;transform:scaleX(0.858);transform-origin:right;">84448.80</div>
<div class="t" style="left:359.55px;top:392.05px;font-size:5.0px;line-height:5.0px;color:#2a2a2a;transform:scaleX(0.902);transform-origin:right;">85052.61</div>
<div class="t" style="left:423.03px;top:392.05px;font-size:5.0px;line-height:5.0px;color:#2a2a2a;transform:scaleX(0.859);transform-origin:right;">2025.04.20 18:19:24</div>
<div class="t" style="left:488.15px;top:392.05px;font-size:5.0px;line-height:5.0px;color:#2a2a2a;transform:scaleX(0.851);transform-origin:right;">84448.80</div>
<div class="t" style="left:532.79px;top:392.05px;font-size:5.0px;line-height:5.0px;color:#2a2a2a;transform:scaleX(0.870);transform-origin:right;">-286.28</div>
<div class="t" style="left:580.02px;top:392.05px;font-size:5.0px;line-height:5.0px;color:#2a2a2a;transform:scaleX(0.899);transform-origin:right;">0.00</div>
<div class="t" style="left:615.04px;top:392.05px;font-size:5.0px;line-height:5.0px;color:#2a2a2a;transform:scaleX(0.930);transform-origin:right;">2 547.89</div>
<div class="t" style="left:709.66px;top:391.90px;font-size:5.3px;line-height:5.3px;color:#2a2a2a;transform:scaleX(0.952);transform-origin:right;">memberforex.com[d]</div>
<svg style="position:absolute;left:7px;top:399.30px" width="7" height="7" viewBox="0 0 7 7"><path d="M0.6 0.4 H3.6 L5 1.8 V5.8 H0.6 Z" fill="#ffffff" stroke="#9a9a9a" stroke-width="0.5"/><path d="M3.6 0.4 V1.8 H5" fill="none" stroke="#9a9a9a" stroke-width="0.4"/><circle cx="4.7" cy="5.2" r="1.5" fill="#2a8ae8"/></svg>
<div class="t" style="left:19.20px;top:400.05px;font-size:5.0px;line-height:5.0px;color:#2a2a2a;transform:scaleX(0.889);transform-origin:left;">651134</div>
<div class="t" style="left:99.73px;top:400.05px;font-size:5.0px;line-height:5.0px;color:#2a2a2a;transform:scaleX(0.859);transform-origin:right;">2025.04.20 18:19:13</div>
<div class="t" style="left:177.94px;top:400.05px;font-size:5.0px;line-height:5.0px;color:#2a2a2a;transform:scaleX(0.868);transform-origin:right;">buy</div>
<div class="t" style="left:205.39px;top:400.05px;font-size:5.0px;line-height:5.0px;color:#2a2a2a;transform:scaleX(0.799);transform-origin:right;">71.79</div>
<div class="t" style="left:240.54px;top:399.90px;font-size:5.3px;line-height:5.3px;color:#2a2a2a;transform:scaleX(0.943);transform-origin:right;">btcusdp</div>
<div class="t" style="left:278.25px;top:400.05px;font-size:5.0px;line-height:5.0px;color:#2a2a2a;transform:scaleX(0.868);transform-origin:right;">84376.10</div>
<div class="t" style="left:318.65px;top:400.05px;font-size:5.0px;line-height:5.0px;color:#1e1e1e;transform:scaleX(0.858);transform-origin:right;">84403.30</div>
<div class="t" style="left:359.92px;top:400.05px;font-size:5.0px;line-height:5.0px;color:#2a2a2a;transform:scaleX(0.918);transform-origin:right;">85007.11</div>
<div class="t" style="left:423.03px;top:400.05px;font-size:5.0px;line-height:5.0px;color:#2a2a2a;transform:scaleX(0.859);transform-origin:right;">2025.04.20 18:19:45</div>
<div class="t" style="left:488.15px;top:400.05px;font-size:5.0px;line-height:5.0px;color:#2a2a2a;transform:scaleX(0.851);transform-origin:right;">84403.30</div>
<div class="t" style="left:532.79px;top:400.05px;font-size:5.0px;line-height:5.0px;color:#2a2a2a;transform:scaleX(0.870);transform-origin:right;">-287.16</div>
<div class="t" style="left:580.02px;top:400.05px;font-size:5.0px;line-height:5.0px;color:#2a2a2a;transform:scaleX(0.899);transform-origin:right;">0.00</div>
<div class="t" style="left:615.04px;top:400.05px;font-size:5.0px;line-height:5.0px;color:#2a2a2a;transform:scaleX(0.930);transform-origin:right;">1 952.69</div>
<div class="t" style="left:709.66px;top:399.90px;font-size:5.3px;line-height:5.3px;color:#2a2a2a;transform:scaleX(0.952);transform-origin:right;">memberforex.com[d]</div>
<div style="left:16.8px;top:204.6px;width:2.9px;height:200.2px;background:rgba(206,206,206,0.8);"></div>
<div style="left:33.2px;top:204.6px;width:2.9px;height:200.2px;background:rgba(206,206,206,0.8);"></div>
<div class="t" style="left:9.00px;top:199.35px;font-size:5.0px;line-height:5.0px;color:#1e1e1e;transform:scaleX(0.900);transform-origin:left;">Order</div>
<div class="t" style="left:134.61px;top:200.45px;font-size:4.8px;line-height:4.8px;color:#1e1e1e;transform:scaleX(0.963);transform-origin:right;">Time</div>
<div class="t" style="left:175.34px;top:200.45px;font-size:4.8px;line-height:4.8px;color:#1e1e1e;transform:scaleX(0.961);transform-origin:right;">Type</div>
<div class="t" style="left:207.91px;top:200.45px;font-size:4.8px;line-height:4.8px;color:#1e1e1e;transform:scaleX(0.835);transform-origin:right;">Size</div>
<div class="t" style="left:241.23px;top:200.35px;font-size:5.0px;line-height:5.0px;color:#1e1e1e;transform:scaleX(0.954);transform-origin:right;">Symbol</div>
<div class="t" style="left:287.56px;top:200.45px;font-size:4.8px;line-height:4.8px;color:#1e1e1e;transform:scaleX(0.969);transform-origin:right;">Price</div>
<div class="t" style="left:328.63px;top:200.45px;font-size:4.8px;line-height:4.8px;color:#1e1e1e;transform:scaleX(0.962);transform-origin:right;">S / L</div>
<div class="t" style="left:369.05px;top:200.45px;font-size:4.8px;line-height:4.8px;color:#1e1e1e;transform:scaleX(0.956);transform-origin:right;">T / P</div>
<div class="t" style="left:457.41px;top:200.45px;font-size:4.8px;line-height:4.8px;color:#1e1e1e;transform:scaleX(0.953);transform-origin:right;">Time</div>
<div class="t" style="left:497.06px;top:200.45px;font-size:4.8px;line-height:4.8px;color:#1e1e1e;transform:scaleX(0.914);transform-origin:right;">Price</div>
<div class="t" style="left:514.00px;top:200.45px;font-size:4.8px;line-height:4.8px;color:#1e1e1e;">Commission</div>
<svg style="position:absolute;left:544.5px;top:199.5px" width="4" height="4" viewBox="0 0 4 4"><path d="M0.3 0.6 L3.7 0.6 L2.3 2.2 L2.3 3.6 L1.7 3.6 L1.7 2.2 Z" fill="#a0a0a0"/></svg>
<div class="t" style="left:577.49px;top:200.45px;font-size:4.8px;line-height:4.8px;color:#1e1e1e;transform:scaleX(0.966);transform-origin:right;">Swap</div>
<div class="t" style="left:622.30px;top:200.45px;font-size:4.8px;line-height:4.8px;color:#1e1e1e;transform:scaleX(1.062);transform-origin:right;">Profit</div>
<div class="t" style="left:736.20px;top:200.45px;font-size:4.8px;line-height:4.8px;color:#1e1e1e;transform:scaleX(1.021);transform-origin:right;">Comment</div>
<div style="left:759px;top:196.6px;width:9px;height:209px;background:#f0f0f0;"></div>
<div style="left:760.2px;top:222px;width:6px;height:22px;background:#cdcdcd;"></div>
<svg style="position:absolute;left:761px;top:198px" width="5" height="4" viewBox="0 0 5 4"><path d="M0.6 2.8 L2.5 1 L4.4 2.8" stroke="#606060" stroke-width="0.8" fill="none"/></svg>
<svg style="position:absolute;left:761px;top:400.5px" width="5" height="4" viewBox="0 0 5 4"><path d="M0.6 1 L2.5 2.8 L4.4 1" stroke="#606060" stroke-width="0.8" fill="none"/></svg>
<div style="left:6px;top:405.4px;width:762px;height:9.2px;background:#f0f0f0;"></div>
<div style="left:6px;top:404.7px;width:762px;height:0.8px;background:#a0a0a0;"></div>
<div style="left:54px;top:405.4px;width:42.5px;height:8.6px;background:#fff;border:0.7px solid #6e6e6e;border-top:none;box-sizing:border-box"></div>
<div class="t" style="left:11.00px;top:407.75px;font-size:5.0px;line-height:5.0px;color:#8a8a8a;transform:scaleX(0.893);transform-origin:left;">Trade</div>
<div class="t" style="left:31.00px;top:407.75px;font-size:5.0px;line-height:5.0px;color:#8a8a8a;transform:scaleX(0.876);transform-origin:left;">Exposure</div>
<div class="t" style="left:58.00px;top:407.75px;font-size:5.0px;line-height:5.0px;color:#1e1e1e;transform:scaleX(0.983);transform-origin:left;">Account History</div>
<div class="t" style="left:100.40px;top:407.75px;font-size:5.0px;line-height:5.0px;color:#8a8a8a;transform:scaleX(0.928);transform-origin:left;">News</div>
<div class="t" style="left:120.00px;top:407.75px;font-size:5.0px;line-height:5.0px;color:#8a8a8a;transform:scaleX(0.915);transform-origin:left;">Alerts</div>
<div class="t" style="left:140.00px;top:407.75px;font-size:5.0px;line-height:5.0px;color:#8a8a8a;transform:scaleX(0.952);transform-origin:left;">Mailbox</div>
<div class="t" style="left:168.00px;top:407.75px;font-size:5.0px;line-height:5.0px;color:#8a8a8a;transform:scaleX(0.982);transform-origin:left;">Market</div>
<div class="t" style="left:198.00px;top:407.75px;font-size:5.0px;line-height:5.0px;color:#8a8a8a;transform:scaleX(0.915);transform-origin:left;">Articles</div>
<div class="t" style="left:221.50px;top:407.75px;font-size:5.0px;line-height:5.0px;color:#8a8a8a;transform:scaleX(0.869);transform-origin:left;">Code Base</div>
<div class="t" style="left:251.50px;top:407.75px;font-size:5.0px;line-height:5.0px;color:#8a8a8a;transform:scaleX(0.855);transform-origin:left;">Experts</div>
<div class="t" style="left:274.00px;top:407.75px;font-size:5.0px;line-height:5.0px;color:#8a8a8a;transform:scaleX(0.976);transform-origin:left;">Journal</div>
<div style="left:26.7px;top:407px;width:0.6px;height:5.5px;background:#c0c0c0;"></div>
<div style="left:114.7px;top:407px;width:0.6px;height:5.5px;background:#c0c0c0;"></div>
<div style="left:135.7px;top:407px;width:0.6px;height:5.5px;background:#c0c0c0;"></div>
<div style="left:163.7px;top:407px;width:0.6px;height:5.5px;background:#c0c0c0;"></div>
<div style="left:193.29999999999998px;top:407px;width:0.6px;height:5.5px;background:#c0c0c0;"></div>
<div style="left:217.29999999999998px;top:407px;width:0.6px;height:5.5px;background:#c0c0c0;"></div>
<div style="left:247.2px;top:407px;width:0.6px;height:5.5px;background:#c0c0c0;"></div>
<div style="left:270.2px;top:407px;width:0.6px;height:5.5px;background:#c0c0c0;"></div>
<div style="left:293.2px;top:407px;width:0.6px;height:5.5px;background:#c0c0c0;"></div>
<div class="t" style="left:157.60px;top:410.13px;font-size:3.4px;line-height:3.4px;color:#e01010;transform:scaleX(1.269);transform-origin:left;">6</div>
<div class="t" style="left:183.40px;top:410.13px;font-size:3.4px;line-height:3.4px;color:#e01010;transform:scaleX(1.058);transform-origin:left;">123</div>
<div style="left:0px;top:414.6px;width:768px;height:10.4px;background:#f0f0f0;"></div>
<div style="left:0px;top:414.4px;width:768px;height:0.5px;background:#dadada;"></div>
<div class="t" style="left:1.20px;top:419.15px;font-size:4.8px;line-height:4.8px;color:#1e1e1e;transform:scaleX(0.931);transform-origin:left;">For Help, press F1</div>
<div style="left:490.0px;top:416.7px;width:0.6px;height:8px;background:#c8c8c8;"></div>
<div style="left:536.4000000000001px;top:416.7px;width:0.6px;height:8px;background:#c8c8c8;"></div>
<div style="left:577.4000000000001px;top:416.7px;width:0.6px;height:8px;background:#c8c8c8;"></div>
<div style="left:606.6px;top:416.7px;width:0.6px;height:8px;background:#c8c8c8;"></div>
<div style="left:635.5px;top:416.7px;width:0.6px;height:8px;background:#c8c8c8;"></div>
<div style="left:662.1px;top:416.7px;width:0.6px;height:8px;background:#c8c8c8;"></div>
<div style="left:690.1px;top:416.7px;width:0.6px;height:8px;background:#c8c8c8;"></div>
<div style="left:715.7px;top:416.7px;width:0.6px;height:8px;background:#c8c8c8;"></div>
<div class="t" style="left:492.90px;top:419.75px;font-size:4.6px;line-height:4.6px;color:#1e1e1e;transform:scaleX(1.036);transform-origin:left;">Default</div>
<div class="t" style="left:539.00px;top:419.75px;font-size:4.6px;line-height:4.6px;color:#1e1e1e;transform:scaleX(0.936);transform-origin:left;">2025.04.21 01:45</div>
<div class="t" style="left:579.90px;top:419.75px;font-size:4.6px;line-height:4.6px;color:#1e1e1e;transform:scaleX(0.944);transform-origin:left;">O: 84754.10</div>
<div class="t" style="left:608.50px;top:419.75px;font-size:4.6px;line-height:4.6px;color:#1e1e1e;transform:scaleX(0.954);transform-origin:left;">H: 84806.90</div>
<div class="t" style="left:636.40px;top:419.75px;font-size:4.6px;line-height:4.6px;color:#1e1e1e;transform:scaleX(0.947);transform-origin:left;">L: 84719.80</div>
<div class="t" style="left:664.70px;top:419.75px;font-size:4.6px;line-height:4.6px;color:#1e1e1e;transform:scaleX(0.922);transform-origin:left;">C: 84792.60</div>
<div class="t" style="left:692.20px;top:419.75px;font-size:4.6px;line-height:4.6px;color:#1e1e1e;transform:scaleX(0.945);transform-origin:left;">V: 134</div>
<svg style="position:absolute;left:718.4px;top:417.6px" width="9.4" height="6" viewBox="0 0 9.4 6"><rect x="0" y="0" width="9.4" height="6" fill="#3a7ac0"/><path d="M0 3.6 Q3 1.2 9.4 0.6 V0 H0 Z" fill="#e8f0f8"/><path d="M0 4.2 Q3.5 1.8 9.4 1.4 V2.8 Q4 3.4 0 6 Z" fill="#5aaa50"/></svg>
<div class="t" style="left:729.00px;top:419.75px;font-size:4.6px;line-height:4.6px;color:#1e1e1e;transform:scaleX(1.027);transform-origin:left;">1008/294 kb</div>
<svg style="position:absolute;left:762px;top:419px" width="6" height="6" viewBox="0 0 6 6"><path d="M5 1 V5 H1 Z" fill="#c0c0c0"/></svg>
<div style="left:0px;top:424.4px;width:14.4px;height:0.6px;background:#5a5a5a;"></div>
<div style="left:117.5px;top:424.4px;width:650.5px;height:0.6px;background:#5a5a5a;"></div>
</body></html>
